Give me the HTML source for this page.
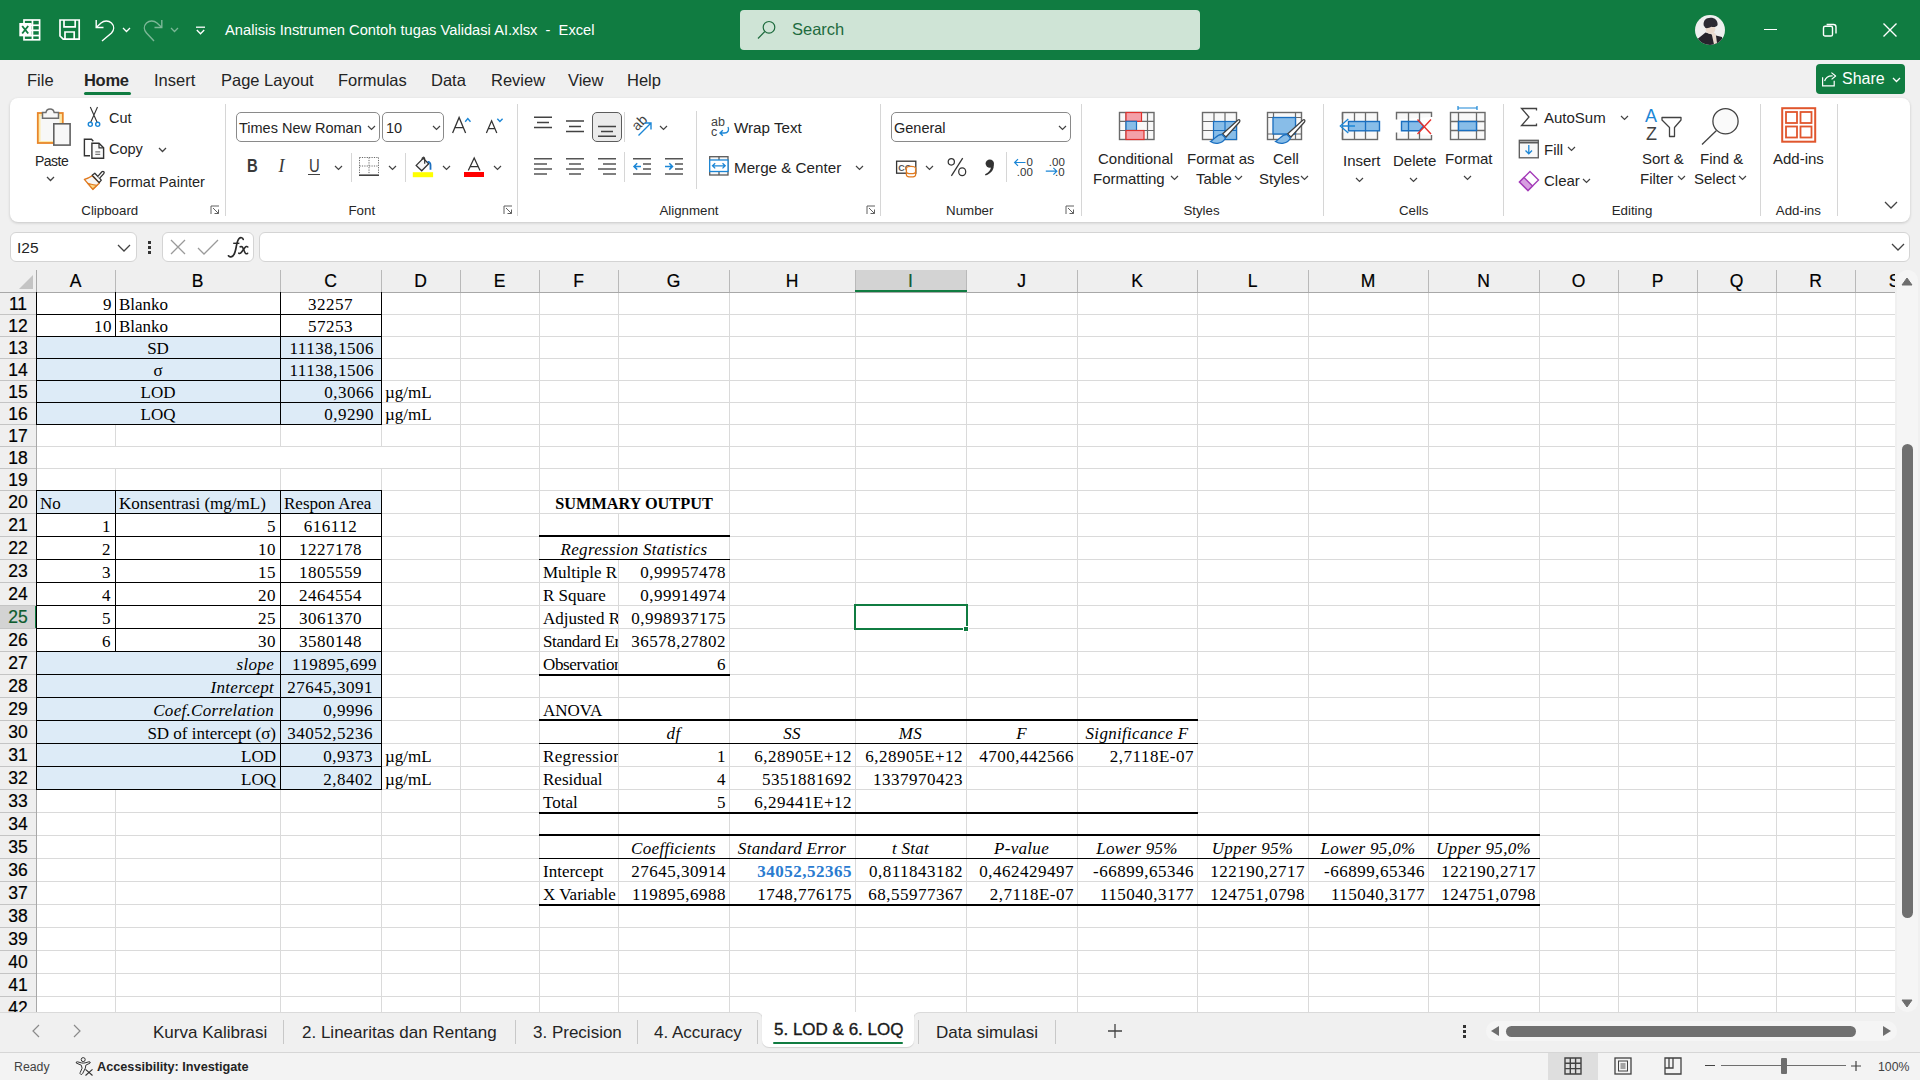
<!DOCTYPE html>
<html><head><meta charset="utf-8">
<style>
*{margin:0;padding:0;box-sizing:border-box}
html,body{width:1920px;height:1080px;overflow:hidden;background:#f0f0f0;font-family:"Liberation Sans",sans-serif;color:#242424}
.a{position:absolute}
svg{position:absolute;overflow:visible}
.t{position:absolute;white-space:nowrap;line-height:1}
#title{left:0;top:0;width:1920px;height:60px;background:#107c41}
#tabs{left:0;top:60px;width:1920px;height:37px;background:#f0f0f0}
#ribbon{left:10px;top:98px;width:1900px;height:124px;background:#fff;border-radius:8px;box-shadow:0 1px 3px rgba(0,0,0,.18)}
.rt{font-size:15px;color:#242424}
.gl{font-size:13.3px;color:#262626}
.sep{position:absolute;width:1px;background:#d6d6d6}
.cell{position:absolute;font-family:"Liberation Serif",serif;font-size:17px;color:#000;white-space:nowrap;line-height:1}
.num{letter-spacing:.5px}
.hl{position:absolute;height:1px;background:#dadada}
.vl{position:absolute;width:1px;background:#dadada}
.bk{position:absolute;background:#000}
.ch{position:absolute;top:270px;height:22px;font-size:16px;color:#000;text-align:center;line-height:22px}
.rh{position:absolute;left:0;width:36px;font-size:16px;color:#000;text-align:center}
</style></head><body>
<div id="title" class="a">
 <!-- excel logo -->
 <svg width="22" height="22" style="left:19px;top:19px" viewBox="0 0 22 22">
  <rect x="5" y="1" width="15.6" height="19.8" fill="none" stroke="#fff" stroke-width="1.7"/>
  <g fill="#fff">
   <rect x="12.6" y="1" width="1.7" height="19.8"/>
   <rect x="5" y="5.4" width="15.6" height="1.7"/><rect x="5" y="10.5" width="15.6" height="1.7"/><rect x="5" y="15.7" width="15.6" height="1.7"/>
  </g>
  <rect x="0.3" y="4" width="12.3" height="13.3" fill="#fff"/>
  <path d="M3.2 7 L9.2 14.5 M9.2 7 L3.2 14.5" stroke="#107c41" stroke-width="1.9"/>
 </svg>
 <!-- save -->
 <svg width="22" height="22" style="left:59px;top:19px" viewBox="0 0 22 22">
  <path d="M1 1 H20.2 V20.2 H4.2 L1 17 Z" fill="none" stroke="#fff" stroke-width="1.7"/>
  <path d="M5 1 V7.8 H16.2 V1" fill="none" stroke="#fff" stroke-width="1.7"/>
  <path d="M6 20.2 V13 H15.2 V20.2" fill="none" stroke="#fff" stroke-width="1.7"/>
 </svg>
 <!-- undo -->
 <svg width="22" height="22" style="left:95px;top:19px" viewBox="0 0 22 22">
  <path d="M1.2 1 V8.5 H8.5" fill="none" stroke="#fff" stroke-width="1.4"/>
  <path d="M1.5 8.3 L6 4 C9 1.5 13.5 1.3 16.5 4 C19.5 7 19.2 11 16.5 14 L7 22" fill="none" stroke="#fff" stroke-width="1.4"/>
 </svg>
 <svg width="10" height="6" style="left:122px;top:27px" viewBox="0 0 10 6"><path d="M1 1 L4.5 4.5 L8 1" fill="none" stroke="#fff" stroke-width="1.3"/></svg>
 <!-- redo faded -->
 <svg width="22" height="22" style="left:143px;top:19px" viewBox="0 0 22 22" opacity="0.45">
  <path d="M18.8 1 V8.5 H11.5" fill="none" stroke="#fff" stroke-width="1.4"/>
  <path d="M18.5 8.3 L14 4 C11 1.5 6.5 1.3 3.5 4 C0.5 7 0.8 11 3.5 14 L11 22" fill="none" stroke="#fff" stroke-width="1.4"/>
 </svg>
 <svg width="10" height="6" style="left:170px;top:27px" viewBox="0 0 10 6" opacity="0.45"><path d="M1 1 L4.5 4.5 L8 1" fill="none" stroke="#fff" stroke-width="1.3"/></svg>
 <!-- customize -->
 <svg width="11" height="10" style="left:195px;top:26px" viewBox="0 0 11 10"><path d="M1 1.2 H10" stroke="#fff" stroke-width="1.3"/><path d="M1.8 4 L5.5 7.8 L9.2 4" fill="none" stroke="#fff" stroke-width="1.3"/></svg>
 <div class="t" style="left:225px;top:23px;font-size:14.7px;color:#fff">Analisis Instrumen Contoh tugas Validasi AI.xlsx&nbsp; - &nbsp;Excel</div>
 <!-- search -->
 <div class="a" style="left:740px;top:10px;width:460px;height:40px;background:#cfe4d6;border-radius:4px"></div>
 <svg width="20" height="20" style="left:757px;top:20px" viewBox="0 0 20 20"><circle cx="12" cy="7.3" r="5.8" fill="none" stroke="#1e6b3e" stroke-width="1.2"/><path d="M7.8 11.5 L1 18.5" stroke="#1e6b3e" stroke-width="1.2"/></svg>
 <div class="t" style="left:792px;top:21px;font-size:16.5px;color:#1e6b3e">Search</div>
 <!-- avatar -->
 <svg width="30" height="30" style="left:1695px;top:15px" viewBox="0 0 30 30">
  <defs><clipPath id="avc"><circle cx="15" cy="15" r="15"/></clipPath></defs>
  <circle cx="15" cy="15" r="15" fill="#efefef"/>
  <g clip-path="url(#avc)">
   <path d="M2.5 24 L10.5 17.5 L17 19.5 L27 22 L28 31 L2 31 Z" fill="#26242c"/>
   <ellipse cx="15.5" cy="14.3" rx="4.8" ry="4.6" fill="#e9d9cd"/>
   <path d="M8.7 10.5 C8 5.5 11 2.8 15.5 2.8 C20 2.8 23 5.5 22.6 10 C21.5 12 19 12.5 16.5 11.8 C14.5 12.8 12 13.5 10.5 13 Z" fill="#2b2a33"/>
   <path d="M16.8 19.5 C18 17.5 20 17.8 20.8 19.5 L22 28 L19 29.5 Z" fill="#eadbd0"/>
  </g>
 </svg>
 <div class="a" style="left:1764px;top:28.5px;width:13px;height:1.5px;background:#fff"></div>
 <svg width="16" height="16" style="left:1822px;top:22px" viewBox="0 0 16 16"><rect x="1.5" y="4.2" width="9" height="9.8" rx="1.6" fill="none" stroke="#fff" stroke-width="1.4"/><path d="M4.6 2.5 H11.5 A2.5 2.5 0 0 1 14 5 V11.5" fill="none" stroke="#fff" stroke-width="1.4"/></svg>
 <svg width="16" height="16" style="left:1882px;top:22px" viewBox="0 0 16 16"><path d="M1.5 1.5 L14.5 14.5 M14.5 1.5 L1.5 14.5" stroke="#fff" stroke-width="1.4"/></svg>
</div>
<div id="tabs" class="a">
 <div class="t" style="left:27px;top:12px;font-size:16.5px">File</div>
 <div class="t" style="left:84px;top:12px;font-size:16.5px;font-weight:bold;letter-spacing:-0.3px">Home</div>
 <div class="a" style="left:84px;top:32px;width:47px;height:3px;border-radius:2px;background:#107c41"></div>
 <div class="t" style="left:154px;top:12px;font-size:16.5px">Insert</div>
 <div class="t" style="left:221px;top:12px;font-size:16.5px">Page Layout</div>
 <div class="t" style="left:338px;top:12px;font-size:16.5px">Formulas</div>
 <div class="t" style="left:431px;top:12px;font-size:16.5px">Data</div>
 <div class="t" style="left:491px;top:12px;font-size:16.5px">Review</div>
 <div class="t" style="left:568px;top:12px;font-size:16.5px">View</div>
 <div class="t" style="left:627px;top:12px;font-size:16.5px">Help</div>
 <div class="a" style="left:1816px;top:4px;width:89px;height:30px;border-radius:4px;background:#107c41"></div>
 <svg width="20" height="20" style="left:1820px;top:10px" viewBox="0 0 20 20"><path d="M2.6 7.2 V15.8 H14.2 V10.8" fill="none" stroke="#fff" stroke-width="1.2"/><path d="M4.6 11 C5.6 7.6 8.6 5.6 12.6 5.8" fill="none" stroke="#fff" stroke-width="1.2"/><path d="M11.4 2.6 L15.6 6 L11.6 9.4" fill="none" stroke="#fff" stroke-width="1.2" stroke-linejoin="round"/></svg>
 <div class="t" style="left:1842px;top:11px;font-size:16px;color:#fff">Share</div>
 <svg width="10" height="6" style="left:1892px;top:17px" viewBox="0 0 10 6"><path d="M1 1 L4.5 4.5 L8 1" fill="none" stroke="#fff" stroke-width="1.3"/></svg>
</div>
<div id="ribbon" class="a"></div>
<!-- ===== Clipboard ===== -->
<svg width="36" height="40" style="left:36px;top:107px" viewBox="0 0 36 40">
 <rect x="1.8" y="6" width="25" height="30" fill="#fde9a8" stroke="#e8862a" stroke-width="1.8"/>
 <rect x="4.5" y="9" width="19" height="25" fill="#f7f7f7"/>
 <path d="M6.5 11.2 V5.6 H9.9 A4.2 4.4 0 0 1 18.2 5.6 H22.5 V11.2 Z" fill="#f7f7f7" stroke="#6e6e6e" stroke-width="1.5"/>
 <rect x="17.8" y="16.8" width="16.3" height="21.3" fill="#f7f7f7" stroke="#616161" stroke-width="1.6"/>
</svg>
<div class="t rt" style="left:35px;top:154px;font-size:14px;letter-spacing:-0.5px">Paste</div>
<svg width="10" height="6" style="left:46px;top:176px" viewBox="0 0 10 6"><path d="M1 1 L4.5 4.5 L8 1" fill="none" stroke="#424242" stroke-width="1.3"/></svg>
<svg width="16" height="22" style="left:86px;top:106px" viewBox="0 0 16 22">
 <path d="M4.3 1.1 L11.2 16.4 M11.5 1.1 L4.6 16.4" stroke="#333" stroke-width="1.1" fill="none"/>
 <circle cx="4.3" cy="18.3" r="2.05" fill="#fff" stroke="#1b86d6" stroke-width="1.4"/>
 <circle cx="11.7" cy="18.3" r="2.05" fill="#fff" stroke="#1b86d6" stroke-width="1.4"/>
</svg>
<div class="t rt" style="left:109px;top:111px;font-size:14.5px">Cut</div>
<svg width="26" height="26" style="left:80px;top:135px" viewBox="0 0 26 26">
 <path d="M10 20.8 H4.4 V4.2 H11.5 L13.3 6.2" fill="none" stroke="#333" stroke-width="1.4"/>
 <path d="M11.9 8.3 H19 L23.6 12.8 V23.3 H11.9 Z" fill="#fafafa" stroke="#333" stroke-width="1.4" stroke-linejoin="miter"/>
 <path d="M19 8.3 V12.8 H23.6" fill="none" stroke="#333" stroke-width="1.2"/>
 <path d="M15.3 16.9 H20.2 M15.3 19.4 H20.2" stroke="#777" stroke-width="1.1"/>
</svg>
<div class="t rt" style="left:109px;top:142px;font-size:14.5px">Copy</div>
<svg width="10" height="6" style="left:158px;top:147px" viewBox="0 0 10 6"><path d="M1 1 L4.5 4.5 L8 1" fill="none" stroke="#424242" stroke-width="1.3"/></svg>
<svg width="26" height="26" style="left:80px;top:165px" viewBox="0 0 26 26">
  <path d="M12.2 10.8 Q8.5 13.4 4.4 14.4 L12.8 24.4 L19.4 18 Z" fill="#f6f6f6" stroke="#e07a1f" stroke-width="1.4" stroke-linejoin="round"/>
  <path d="M7.6 18.2 Q12.2 19.6 16.8 20.4 L12.8 24 Z" fill="#fbd98a" stroke="#e07a1f" stroke-width="1.1" stroke-linejoin="round"/>
  <path d="M12.2 10.3 L14.8 8.2 L21.3 15.1 L19.2 17.6 Z" fill="#fff" stroke="#333" stroke-width="1.3" stroke-linejoin="round"/>
  <path d="M17.6 11.6 L21.9 6.8 Q22.9 5.9 23.8 6.8 Q24.6 7.7 23.8 8.6 L19.5 13.4" fill="#fff" stroke="#333" stroke-width="1.3"/>
</svg>
<div class="t rt" style="left:109px;top:175px;font-size:14.5px">Format Painter</div>
<div class="t gl" style="left:81.3px;top:204px">Clipboard</div>
<svg width="10" height="10" style="left:210px;top:205px" viewBox="0 0 10 10"><path d="M1 9 V1 H9" fill="none" stroke="#616161" stroke-width="1"/><path d="M3 3 L8.5 8.5 M4.5 8.5 H8.5 V4.5" fill="none" stroke="#616161" stroke-width="1"/></svg>
<div class="sep" style="left:225px;top:104px;height:112px"></div>
<!-- ===== Font ===== -->
<div class="a" style="left:236px;top:112px;width:144px;height:30px;border:1px solid #8a8a8a;border-radius:5px"></div>
<div class="t rt" style="left:239px;top:121px;font-size:14.5px">Times New Roman</div>
<svg width="10" height="6" style="left:367px;top:125px" viewBox="0 0 10 6"><path d="M1 1 L4.5 4.5 L8 1" fill="none" stroke="#424242" stroke-width="1.2"/></svg>
<div class="a" style="left:382px;top:112px;width:62px;height:30px;border:1px solid #8a8a8a;border-radius:5px"></div>
<div class="t rt" style="left:386px;top:121px;font-size:14.5px">10</div>
<svg width="10" height="6" style="left:432px;top:125px" viewBox="0 0 10 6"><path d="M1 1 L4.5 4.5 L8 1" fill="none" stroke="#424242" stroke-width="1.2"/></svg>
<svg width="22" height="20" style="left:450px;top:115px" viewBox="0 0 22 20"><path d="M2.6 17.9 L9.1 2.4 L15.6 17.9 M4.9 12.7 H13.3" fill="none" stroke="#333" stroke-width="1.3"/><path d="M15.2 6.8 L17.8 3.6 L20.5 6.8" fill="none" stroke="#1b86d6" stroke-width="1.4"/></svg>
<svg width="22" height="18" style="left:484px;top:118px" viewBox="0 0 22 18"><path d="M2.4 15.1 L7.6 2.8 L12.8 15.1 M4.3 10.7 H10.9" fill="none" stroke="#333" stroke-width="1.25"/><path d="M13.3 0.8 L15.9 3.6 L18.6 0.8" fill="none" stroke="#1b86d6" stroke-width="1.4"/></svg>
<div class="t" style="left:246.5px;top:158px;font-size:17.5px;font-weight:bold;color:#3a3a3a;transform:scaleX(0.85);transform-origin:0 0">B</div>
<div class="t" style="left:278.5px;top:157px;font-size:18px;font-style:italic;font-family:'Liberation Serif';color:#3a3a3a">I</div>
<div class="t" style="left:309px;top:158px;font-size:17.5px;color:#3a3a3a;transform:scaleX(0.85);transform-origin:0 0">U</div>
<div class="a" style="left:308px;top:174px;width:12px;height:1.2px;background:#424242"></div>
<svg width="10" height="6" style="left:334px;top:165px" viewBox="0 0 10 6"><path d="M1 1 L4.5 4.5 L8 1" fill="none" stroke="#424242" stroke-width="1.2"/></svg>
<div class="sep" style="left:351px;top:153px;height:29px"></div>
<svg width="20" height="20" style="left:359px;top:157px" viewBox="0 0 20 20">
 <path d="M0.5 0.5 H19.5 M0.5 0.5 V17 M19.5 0.5 V17 M10 0.5 V17 M0.5 9 H19.5" fill="none" stroke="#6a6a6a" stroke-width="1" stroke-dasharray="1.2 1.2"/>
 <path d="M0 18.2 H20" stroke="#424242" stroke-width="1.6"/>
</svg>
<svg width="10" height="6" style="left:388px;top:165px" viewBox="0 0 10 6"><path d="M1 1 L4.5 4.5 L8 1" fill="none" stroke="#424242" stroke-width="1.2"/></svg>
<div class="sep" style="left:405px;top:153px;height:29px"></div>
<svg width="22" height="22" style="left:412px;top:156px" viewBox="0 0 22 22">
 <path d="M4.2 9.4 L11.2 2.4 L16.7 7.8 L9.7 14.8 Z" fill="#f8f8f8" stroke="#333" stroke-width="1.3" stroke-linejoin="miter"/>
 <path d="M10 3.8 C9.8 0.6 12.6 0.4 12.7 3 V7.8" fill="none" stroke="#333" stroke-width="1.2"/>
 <path d="M15.6 5.9 C17.6 5.6 18.5 7.3 18.5 9 V13.8" fill="none" stroke="#1b6fc0" stroke-width="1.8"/>
 <rect x="0.8" y="16.2" width="20.3" height="5" fill="#ffff00"/>
</svg>
<svg width="10" height="6" style="left:442px;top:165px" viewBox="0 0 10 6"><path d="M1 1 L4.5 4.5 L8 1" fill="none" stroke="#424242" stroke-width="1.2"/></svg>
<svg width="14" height="16" style="left:467px;top:156px" viewBox="0 0 14 16"><path d="M1.3 14.6 L7.2 2 L13 14.6 M3.3 10.6 H11.1" fill="none" stroke="#333" stroke-width="1.25"/></svg>
<div class="a" style="left:464px;top:172px;width:20px;height:5px;background:#ff0000"></div>
<svg width="10" height="6" style="left:493px;top:165px" viewBox="0 0 10 6"><path d="M1 1 L4.5 4.5 L8 1" fill="none" stroke="#424242" stroke-width="1.2"/></svg>
<div class="t gl" style="left:348.5px;top:204px">Font</div>
<svg width="10" height="10" style="left:503px;top:205px" viewBox="0 0 10 10"><path d="M1 9 V1 H9" fill="none" stroke="#616161" stroke-width="1"/><path d="M3 3 L8.5 8.5 M4.5 8.5 H8.5 V4.5" fill="none" stroke="#616161" stroke-width="1"/></svg>
<div class="sep" style="left:517px;top:104px;height:112px"></div>
<!-- ===== Alignment ===== -->
<svg width="20" height="14" style="left:534px;top:116px" viewBox="0 0 20 14"><path d="M0 1.2 H18 M3 6.5 H15 M0 11.5 H18" stroke="#424242" stroke-width="1.5"/></svg>
<svg width="20" height="14" style="left:566px;top:120px" viewBox="0 0 20 14"><path d="M0 1 H18 M3 6.4 H15 M0 11.4 H18" stroke="#424242" stroke-width="1.5"/></svg>
<div class="a" style="left:592px;top:112px;width:30px;height:30px;border:1px solid #5c5c5c;border-radius:5px;background:#ebebeb"></div>
<svg width="20" height="14" style="left:598px;top:125px" viewBox="0 0 20 14"><path d="M0 1.4 H18 M3 6.4 H15 M0 11.2 H18" stroke="#424242" stroke-width="1.5"/></svg>
<div class="sep" style="left:624px;top:112px;height:30px"></div>
<div class="t" style="left:632px;top:115px;font-size:14px;color:#424242;transform:rotate(-45deg);transform-origin:8px 8px">ab</div>
<svg width="16" height="16" style="left:637px;top:121px" viewBox="0 0 16 16"><path d="M1.5 14.5 L14 2 M7.5 2 H14 V8.5" fill="none" stroke="#1b86d6" stroke-width="1.4"/></svg>
<svg width="10" height="6" style="left:659px;top:125px" viewBox="0 0 10 6"><path d="M1 1 L4.5 4.5 L8 1" fill="none" stroke="#424242" stroke-width="1.2"/></svg>
<svg width="20" height="18" style="left:534px;top:158px" viewBox="0 0 20 18"><path d="M0 0.7 H18 M0 5.9 H13 M0 11 H18 M0 16 H13" stroke="#555" stroke-width="1.5"/></svg>
<svg width="20" height="18" style="left:566px;top:158px" viewBox="0 0 20 18"><path d="M0 0.7 H18 M3 5.9 H15 M0 11 H18 M3 16 H15" stroke="#555" stroke-width="1.5"/></svg>
<svg width="20" height="18" style="left:598px;top:158px" viewBox="0 0 20 18"><path d="M0 0.7 H18 M5 5.9 H18 M0 11 H18 M5 16 H18" stroke="#555" stroke-width="1.5"/></svg>
<div class="sep" style="left:624px;top:152px;height:30px"></div>
<svg width="20" height="18" style="left:633px;top:158px" viewBox="0 0 20 18"><path d="M0 0.7 H18 M10 5.9 H18 M10 11 H18 M0 16 H18" stroke="#555" stroke-width="1.5"/><path d="M8 8.4 H1 M4.2 5.2 L1 8.4 L4.2 11.6" fill="none" stroke="#1b86d6" stroke-width="1.5"/></svg>
<svg width="20" height="18" style="left:665px;top:158px" viewBox="0 0 20 18"><path d="M0 0.7 H18 M10 5.9 H18 M10 11 H18 M0 16 H18" stroke="#555" stroke-width="1.5"/><path d="M0 8.4 H7.5 M4.3 5.2 L7.5 8.4 L4.3 11.6" fill="none" stroke="#1b86d6" stroke-width="1.5"/></svg>
<div class="sep" style="left:696px;top:111px;height:78px"></div>
<div class="t" style="left:711px;top:117px;font-size:12.5px;color:#424242;line-height:10px">ab<br>c</div>
<svg width="12" height="11" style="left:718px;top:126px" viewBox="0 0 12 11"><path d="M10 1 C11.5 4 10 7 6.5 7 H2 M4.8 4.2 L2 7 L4.8 9.8" fill="none" stroke="#1b86d6" stroke-width="1.4"/></svg>
<div class="t rt" style="left:734px;top:120px;font-size:15.2px">Wrap Text</div>
<svg width="20" height="20" style="left:709px;top:156px" viewBox="0 0 20 20">
 <rect x="0.7" y="0.7" width="18.3" height="18.3" fill="#f7f7f7" stroke="#5a5a5a" stroke-width="1.3"/>
 <path d="M10 0.7 V4 M10 15.5 V19" stroke="#5a5a5a" stroke-width="1.3"/>
 <rect x="0.7" y="4" width="18.3" height="11.5" fill="#fff" stroke="#1b86d6" stroke-width="1.3"/>
 <path d="M3.5 9.8 H16.2 M6.2 7.2 L3.5 9.8 L6.2 12.4 M13.5 7.2 L16.2 9.8 L13.5 12.4" fill="none" stroke="#1b86d6" stroke-width="1.3"/>
</svg>
<div class="t rt" style="left:734px;top:160px;font-size:15.2px">Merge &amp; Center</div>
<svg width="10" height="6" style="left:855px;top:165px" viewBox="0 0 10 6"><path d="M1 1 L4.5 4.5 L8 1" fill="none" stroke="#424242" stroke-width="1.2"/></svg>
<div class="t gl" style="left:659.4px;top:204px">Alignment</div>
<svg width="10" height="10" style="left:866px;top:205px" viewBox="0 0 10 10"><path d="M1 9 V1 H9" fill="none" stroke="#616161" stroke-width="1"/><path d="M3 3 L8.5 8.5 M4.5 8.5 H8.5 V4.5" fill="none" stroke="#616161" stroke-width="1"/></svg>
<div class="sep" style="left:880px;top:104px;height:112px"></div>
<!-- ===== Number ===== -->
<div class="a" style="left:891px;top:112px;width:180px;height:30px;border:1px solid #8a8a8a;border-radius:5px"></div>
<div class="t rt" style="left:894px;top:121px;font-size:14.5px">General</div>
<svg width="10" height="6" style="left:1058px;top:125px" viewBox="0 0 10 6"><path d="M1 1 L4.5 4.5 L8 1" fill="none" stroke="#424242" stroke-width="1.2"/></svg>
<svg width="22" height="20" style="left:895px;top:159px" viewBox="0 0 22 20">
 <rect x="1.6" y="2.2" width="19.2" height="12" fill="#fff" stroke="#333" stroke-width="1.3"/>
 <text x="3.2" y="11.8" font-family="Liberation Sans" font-size="9" font-weight="bold" fill="#555">CC</text>
 <ellipse cx="16" cy="9.3" rx="4.6" ry="1.9" fill="#fff" stroke="#e07a1f" stroke-width="1.3"/>
 <path d="M11.4 9.3 V16 A4.6 1.9 0 0 0 20.6 16 V9.3 M11.4 12.7 A4.6 1.9 0 0 0 20.6 12.7" fill="#fff" stroke="#e07a1f" stroke-width="1.3"/>
</svg>
<svg width="10" height="6" style="left:925px;top:165px" viewBox="0 0 10 6"><path d="M1 1 L4.5 4.5 L8 1" fill="none" stroke="#424242" stroke-width="1.2"/></svg>
<svg width="22" height="22" style="left:945px;top:156px" viewBox="0 0 22 22"><ellipse cx="6.3" cy="5.8" rx="3.1" ry="3.2" fill="none" stroke="#333" stroke-width="1.25"/><ellipse cx="17.2" cy="15.7" rx="3.5" ry="3.9" fill="none" stroke="#333" stroke-width="1.25"/><path d="M17.7 2.1 L6.4 19.9" stroke="#333" stroke-width="1.25"/></svg>
<svg width="12" height="18" style="left:984px;top:159px" viewBox="0 0 12 18"><circle cx="5.8" cy="4.6" r="4.2" fill="#333"/><path d="M9.6 5 C10.5 10 7.5 14.5 1.5 16.5 L1 15.3 C5 13.5 7.2 10.5 6.8 7.5 Z" fill="#333"/></svg>
<div class="sep" style="left:1006px;top:152px;height:30px"></div>
<svg width="24" height="22" style="left:1012px;top:156px" viewBox="0 0 24 22">
 <text x="14.6" y="9.6" font-family="Liberation Sans" font-size="11.5" fill="#333">0</text>
 <text x="4.8" y="19.9" font-family="Liberation Sans" font-size="11.5" fill="#333">.00</text>
 <path d="M13.5 6.5 H2.6 M6 3.1 L2.6 6.5 L6 9.9" fill="none" stroke="#1b86d6" stroke-width="1.2"/>
</svg>
<svg width="24" height="22" style="left:1044px;top:156px" viewBox="0 0 24 22">
 <text x="4.8" y="9.6" font-family="Liberation Sans" font-size="11.5" fill="#333">.00</text>
 <text x="11" y="19.9" font-family="Liberation Sans" font-size="11.5" fill="#333">.0</text>
 <path d="M1.8 15.2 H12.8 M9.4 11.8 L12.8 15.2 L9.4 18.6" fill="none" stroke="#1b86d6" stroke-width="1.2"/>
</svg>
<div class="t gl" style="left:946.1px;top:204px">Number</div>
<svg width="10" height="10" style="left:1065px;top:205px" viewBox="0 0 10 10"><path d="M1 9 V1 H9" fill="none" stroke="#616161" stroke-width="1"/><path d="M3 3 L8.5 8.5 M4.5 8.5 H8.5 V4.5" fill="none" stroke="#616161" stroke-width="1"/></svg>
<div class="sep" style="left:1081px;top:104px;height:112px"></div>
<!-- ===== Styles ===== -->
<svg width="38" height="30" style="left:1118px;top:111px" viewBox="0 0 38 30">
 <rect x="1.5" y="1.5" width="34.5" height="27" fill="#f8f8f8" stroke="#6a6a6a" stroke-width="1.4"/>
 <path d="M8 1.5 V28.5 M29.5 1.5 V28.5 M1.5 10.3 H36 M1.5 19.5 H36" stroke="#6a6a6a" stroke-width="1.2"/>
 <rect x="8" y="1.5" width="15.5" height="8.8" fill="#f4a0a8" stroke="#e0312d" stroke-width="1.2"/>
 <rect x="8" y="10.3" width="10.5" height="9.2" fill="#88bde8" stroke="#1a6fc0" stroke-width="1.2"/>
 <rect x="8" y="19.5" width="18" height="9" fill="#f4a0a8" stroke="#e0312d" stroke-width="1.2"/>
</svg>
<div class="t rt" style="left:1098px;top:151px;font-size:15px">Conditional</div>
<div class="t rt" style="left:1093px;top:171px;font-size:15px">Formatting</div>
<svg width="10" height="6" style="left:1170px;top:175px" viewBox="0 0 10 6"><path d="M1 1 L4.5 4.5 L8 1" fill="none" stroke="#424242" stroke-width="1.2"/></svg>
<svg width="40" height="36" style="left:1201px;top:111px" viewBox="0 0 40 36">
 <rect x="1.5" y="1.5" width="34" height="27" fill="#f8f8f8" stroke="#6a6a6a" stroke-width="1.4"/>
 <path d="M13 1.5 V28.5 M24 1.5 V28.5 M1.5 10.5 H35.5 M1.5 19.5 H35.5" stroke="#6a6a6a" stroke-width="1.2"/>
 <rect x="12.5" y="10.5" width="23" height="18" fill="#88bde8" stroke="#1a6fc0" stroke-width="1.2"/>
 <path d="M24 10.5 V28.5 M12.5 19.5 H35.5" stroke="#1a6fc0" stroke-width="1.2"/>
 <path d="M37 9 C38.5 8 39.5 9.5 38.5 11 L25 26 L21.5 23 Z" fill="#fff" stroke="#424242" stroke-width="1.3"/>
 <path d="M21 23.5 C16 23 14 28 9.5 30.5 C14 33.5 21.5 33 24.5 27 Z" fill="#88bde8" stroke="#1a6fc0" stroke-width="1.3"/>
</svg>
<div class="t rt" style="left:1187px;top:151px;font-size:15px">Format as</div>
<div class="t rt" style="left:1196px;top:171px;font-size:15px">Table</div>
<svg width="10" height="6" style="left:1234px;top:175px" viewBox="0 0 10 6"><path d="M1 1 L4.5 4.5 L8 1" fill="none" stroke="#424242" stroke-width="1.2"/></svg>
<svg width="40" height="36" style="left:1266px;top:111px" viewBox="0 0 40 36">
 <rect x="1.5" y="1.5" width="34" height="27" fill="#f8f8f8" stroke="#6a6a6a" stroke-width="1.4"/>
 <path d="M7.5 1.5 V28.5 M29.5 1.5 V28.5 M1.5 6.5 H35.5 M1.5 23 H35.5" stroke="#6a6a6a" stroke-width="1.2"/>
 <rect x="7" y="6.5" width="22.5" height="16.5" fill="#88bde8" stroke="#1a6fc0" stroke-width="1.3"/>
 <path d="M37 9 C38.5 8 39.5 9.5 38.5 11 L25 26 L21.5 23 Z" fill="#fff" stroke="#424242" stroke-width="1.3"/>
 <path d="M21 23.5 C16 23 14 28 9.5 30.5 C14 33.5 21.5 33 24.5 27 Z" fill="#88bde8" stroke="#1a6fc0" stroke-width="1.3"/>
</svg>
<div class="t rt" style="left:1273px;top:151px;font-size:15px">Cell</div>
<div class="t rt" style="left:1259px;top:171px;font-size:15px">Styles</div>
<svg width="10" height="6" style="left:1300px;top:175px" viewBox="0 0 10 6"><path d="M1 1 L4.5 4.5 L8 1" fill="none" stroke="#424242" stroke-width="1.2"/></svg>
<div class="t gl" style="left:1183.4px;top:204px">Styles</div>
<div class="sep" style="left:1323px;top:104px;height:112px"></div>
<!-- ===== Cells ===== -->
<svg width="42" height="30" style="left:1339px;top:111px" viewBox="0 0 42 30">
 <rect x="3.5" y="1.5" width="35" height="27" fill="#f8f8f8" stroke="#6a6a6a" stroke-width="1.4"/>
 <path d="M15.5 1.5 V28.5 M26.5 1.5 V28.5" stroke="#6a6a6a" stroke-width="1.3"/>
 <rect x="9.5" y="10.5" width="31" height="9.3" fill="#88bde8" stroke="#1a6fc0" stroke-width="1.4"/>
 <path d="M26.5 10.5 V19.8" stroke="#1a6fc0" stroke-width="1.3"/>
 <path d="M16 15 H3 M9.3 8 L1.3 15 L9.3 22" fill="none" stroke="#1b86d6" stroke-width="1.3"/>
 <path d="M3.5 8.5 V1.5 M3.5 21.5 V28.5" stroke="#6a6a6a" stroke-width="1.4"/>
</svg>
<div class="t rt" style="left:1343px;top:153px;font-size:15px">Insert</div>
<svg width="10" height="6" style="left:1355px;top:177px" viewBox="0 0 10 6"><path d="M1 1 L4.5 4.5 L8 1" fill="none" stroke="#424242" stroke-width="1.2"/></svg>
<svg width="40" height="30" style="left:1395px;top:111px" viewBox="0 0 40 30">
 <path d="M1.5 8.5 V1.5 H36.5 V6 M1.5 21.5 V28.5 H36.5 V24" fill="#f8f8f8" stroke="#6a6a6a" stroke-width="1.4"/>
 <path d="M13.5 1.5 V28.5 M24.5 1.5 V28.5" stroke="#6a6a6a" stroke-width="1.3"/>
 <path d="M6.5 10.5 H24.5 L28.5 15 L24.5 19.8 H6.5 Z" fill="#88bde8" stroke="#1a6fc0" stroke-width="1.4"/>
 <path d="M13.5 10.5 V19.8" stroke="#1a6fc0" stroke-width="1.3"/>
 <path d="M22.5 8.5 L36 23 M36 8.5 L22.5 23" stroke="#e8312d" stroke-width="1.4"/>
</svg>
<div class="t rt" style="left:1393px;top:153px;font-size:15px">Delete</div>
<svg width="10" height="6" style="left:1409px;top:177px" viewBox="0 0 10 6"><path d="M1 1 L4.5 4.5 L8 1" fill="none" stroke="#424242" stroke-width="1.2"/></svg>
<svg width="38" height="36" style="left:1449px;top:105px" viewBox="0 0 38 36">
 <rect x="1.5" y="7.5" width="34.5" height="27" fill="#f8f8f8" stroke="#6a6a6a" stroke-width="1.4"/>
 <path d="M9.5 7.5 V34.5 M27.5 7.5 V34.5 M1.5 16.5 H36 M1.5 25.5 H36" stroke="#6a6a6a" stroke-width="1.3"/>
 <rect x="9.5" y="16.5" width="18" height="9" fill="#88bde8" stroke="#1a6fc0" stroke-width="1.4"/>
 <path d="M9 3 H28 M9 1 V5 M28 1 V5" stroke="#1b86d6" stroke-width="1.2"/>
</svg>
<div class="t rt" style="left:1445px;top:151px;font-size:15px">Format</div>
<svg width="10" height="6" style="left:1463px;top:175px" viewBox="0 0 10 6"><path d="M1 1 L4.5 4.5 L8 1" fill="none" stroke="#424242" stroke-width="1.2"/></svg>
<div class="t gl" style="left:1398.9px;top:204px">Cells</div>
<div class="sep" style="left:1503px;top:104px;height:112px"></div>
<!-- ===== Editing ===== -->
<svg width="18" height="20" style="left:1520px;top:107px" viewBox="0 0 18 20"><path d="M16.5 3.5 V1.5 H1.5 L9 10 L1.5 18.5 H16.5 V16.5" fill="none" stroke="#424242" stroke-width="1.3"/></svg>
<div class="t rt" style="left:1544px;top:110px;font-size:15px">AutoSum</div>
<svg width="10" height="6" style="left:1620px;top:115px" viewBox="0 0 10 6"><path d="M1 1 L4.5 4.5 L8 1" fill="none" stroke="#424242" stroke-width="1.2"/></svg>
<svg width="22" height="20" style="left:1518px;top:139px" viewBox="0 0 22 20"><rect x="1.3" y="1.3" width="19" height="17.5" fill="#f8f8f8" stroke="#5a5a5a" stroke-width="1.3"/><path d="M1.3 3.5 H20.3" stroke="#5a5a5a" stroke-width="2"/><path d="M10.8 6 V14.5 M7.5 11.5 L10.8 14.8 L14 11.5" fill="none" stroke="#1b86d6" stroke-width="1.3"/></svg>
<div class="t rt" style="left:1544px;top:142px;font-size:15px">Fill</div>
<svg width="10" height="6" style="left:1567px;top:146px" viewBox="0 0 10 6"><path d="M1 1 L4.5 4.5 L8 1" fill="none" stroke="#424242" stroke-width="1.2"/></svg>
<svg width="22" height="22" style="left:1518px;top:170px" viewBox="0 0 22 22"><path d="M1.5 12 L12 1.5 L20.5 10 L10 20.5 Z" fill="#fff" stroke="#a43cb8" stroke-width="1.4"/><path d="M1.5 12 L6 7.5 L14.5 16 L10 20.5 Z" fill="#d79ee0" stroke="#a43cb8" stroke-width="1.4"/></svg>
<div class="t rt" style="left:1544px;top:173px;font-size:15px">Clear</div>
<svg width="10" height="6" style="left:1582px;top:178px" viewBox="0 0 10 6"><path d="M1 1 L4.5 4.5 L8 1" fill="none" stroke="#424242" stroke-width="1.2"/></svg>
<div class="t" style="left:1645px;top:107px;font-size:18px;color:#1b86d6">A</div>
<div class="t" style="left:1646px;top:125px;font-size:18px;color:#424242">Z</div>
<svg width="22" height="22" style="left:1661px;top:116px" viewBox="0 0 22 22"><path d="M1 1.5 H20 V4 L13.5 11.5 V20.5 H8.5 V11.5 L1 4 Z" fill="#fff" stroke="#424242" stroke-width="1.3" stroke-linejoin="round"/></svg>
<div class="t rt" style="left:1642px;top:151px;font-size:15px">Sort &amp;</div>
<div class="t rt" style="left:1640px;top:171px;font-size:15px">Filter</div>
<svg width="10" height="6" style="left:1677px;top:175px" viewBox="0 0 10 6"><path d="M1 1 L4.5 4.5 L8 1" fill="none" stroke="#424242" stroke-width="1.2"/></svg>
<svg width="40" height="40" style="left:1700px;top:106px" viewBox="0 0 40 40"><circle cx="25.5" cy="15.2" r="12.6" fill="#fafafa" stroke="#424242" stroke-width="1.3"/><path d="M16.5 24.5 L2 38.5" stroke="#424242" stroke-width="1.3"/></svg>
<div class="t rt" style="left:1700px;top:151px;font-size:15px">Find &amp;</div>
<div class="t rt" style="left:1694px;top:171px;font-size:15px">Select</div>
<svg width="10" height="6" style="left:1738px;top:175px" viewBox="0 0 10 6"><path d="M1 1 L4.5 4.5 L8 1" fill="none" stroke="#424242" stroke-width="1.2"/></svg>
<div class="t gl" style="left:1611.7px;top:204px">Editing</div>
<div class="sep" style="left:1760px;top:104px;height:112px"></div>
<!-- ===== Add-ins ===== -->
<svg width="36" height="36" style="left:1781px;top:107px" viewBox="0 0 36 36"><rect x="1.2" y="1.2" width="33" height="33.5" fill="none" stroke="#e0562d" stroke-width="2"/><rect x="5" y="5" width="11" height="11" fill="none" stroke="#e0562d" stroke-width="1.8"/><rect x="19.5" y="5" width="11" height="11" fill="none" stroke="#e0562d" stroke-width="1.8"/><rect x="5" y="19.5" width="11" height="11" fill="none" stroke="#e0562d" stroke-width="1.8"/><rect x="19.5" y="19.5" width="11" height="11" fill="none" stroke="#e0562d" stroke-width="1.8"/></svg>
<div class="t rt" style="left:1773px;top:151px;font-size:15px">Add-ins</div>
<div class="t gl" style="left:1775.8px;top:204px">Add-ins</div>
<div class="sep" style="left:1837px;top:104px;height:112px"></div>
<svg width="14" height="8" style="left:1884px;top:201px" viewBox="0 0 14 8"><path d="M1 1 L7 7 L13 1" fill="none" stroke="#424242" stroke-width="1.3"/></svg>
<!-- formula bar -->
<div class="a" style="left:10px;top:232px;width:127px;height:30px;background:#fff;border:1px solid #d4d4d4;border-radius:6px"></div>
<div class="t" style="left:17px;top:240px;font-size:15.5px;color:#242424">I25</div>
<svg width="14" height="8" style="left:117px;top:244px" viewBox="0 0 14 8"><path d="M1 1 L7 7 L13 1" fill="none" stroke="#424242" stroke-width="1.3"/></svg>
<div class="a" style="left:148px;top:241px;width:3px;height:3px;background:#333"></div>
<div class="a" style="left:148px;top:246px;width:3px;height:3px;background:#333"></div>
<div class="a" style="left:148px;top:251px;width:3px;height:3px;background:#333"></div>
<div class="a" style="left:162px;top:232px;width:92px;height:30px;background:#fff;border:1px solid #d4d4d4;border-radius:6px"></div>
<svg width="16" height="16" style="left:170px;top:239px" viewBox="0 0 16 16"><path d="M1 1 L15 15 M15 1 L1 15" stroke="#9a9a9a" stroke-width="1.3"/></svg>
<svg width="22" height="16" style="left:197px;top:239px" viewBox="0 0 22 16"><path d="M1 9 L7 15 L21 1" fill="none" stroke="#9a9a9a" stroke-width="1.3"/></svg>
<svg width="24" height="24" style="left:226px;top:235px" viewBox="0 0 24 24"><path d="M17.2 4.4 C16.8 2.6 14.6 2.1 13 3.6 C11.4 5.1 10.9 8.2 10.2 12 C9.4 16.5 8.5 19.6 6.8 21 C5.3 22.3 3.3 22 2.5 20.8" fill="none" stroke="#2a2a2a" stroke-width="1.7" stroke-linecap="round"/><path d="M7.2 8.3 H13.4" stroke="#2a2a2a" stroke-width="1.4"/><path d="M14.2 11.8 C15.6 11 16.5 11.8 17.2 13.5 L18.8 17.3 C19.5 18.9 20.4 19.2 21.6 18.3" fill="none" stroke="#2a2a2a" stroke-width="1.6" stroke-linecap="round"/><path d="M21.8 12 C20.8 11 19.8 11.6 18.8 12.8 L15.8 16.8 C14.8 18.3 13.8 18.8 12.8 18.2" fill="none" stroke="#2a2a2a" stroke-width="1.6" stroke-linecap="round"/></svg>
<div class="a" style="left:259px;top:232px;width:1651px;height:30px;background:#fff;border:1px solid #d4d4d4;border-radius:6px"></div>
<svg width="14" height="8" style="left:1891px;top:243px" viewBox="0 0 14 8"><path d="M1 1 L7 7 L13 1" fill="none" stroke="#424242" stroke-width="1.3"/></svg>
<div class="a" style="left:36px;top:292px;width:1859px;height:720px;background:#fff"></div>
<div class="a" style="left:0;top:270px;width:1895px;height:22px;background:#efefef"></div>
<div class="a" style="left:0;top:292px;width:36px;height:720px;background:#efefef"></div>
<svg width="16" height="16" style="left:18px;top:274px" viewBox="0 0 16 16"><path d="M15 1 V15 H1 Z" fill="#c4c4c4"/></svg>
<div class="a" style="left:115px;top:292px;width:1px;height:45px;background:#dadada"></div>
<div class="a" style="left:115px;top:424px;width:1px;height:23px;background:#dadada"></div>
<div class="a" style="left:115px;top:468px;width:1px;height:184px;background:#dadada"></div>
<div class="a" style="left:115px;top:789px;width:1px;height:224px;background:#dadada"></div>
<div class="a" style="left:280px;top:292px;width:1px;height:155px;background:#dadada"></div>
<div class="a" style="left:280px;top:468px;width:1px;height:545px;background:#dadada"></div>
<div class="a" style="left:381px;top:292px;width:1px;height:155px;background:#dadada"></div>
<div class="a" style="left:381px;top:468px;width:1px;height:545px;background:#dadada"></div>
<div class="a" style="left:460px;top:292px;width:1px;height:721px;background:#dadada"></div>
<div class="a" style="left:539px;top:292px;width:1px;height:721px;background:#dadada"></div>
<div class="a" style="left:618px;top:292px;width:1px;height:199px;background:#dadada"></div>
<div class="a" style="left:618px;top:513px;width:1px;height:24px;background:#dadada"></div>
<div class="a" style="left:618px;top:559px;width:1px;height:454px;background:#dadada"></div>
<div class="a" style="left:729px;top:292px;width:1px;height:721px;background:#dadada"></div>
<div class="a" style="left:855px;top:292px;width:1px;height:721px;background:#dadada"></div>
<div class="a" style="left:966px;top:292px;width:1px;height:721px;background:#dadada"></div>
<div class="a" style="left:1077px;top:292px;width:1px;height:721px;background:#dadada"></div>
<div class="a" style="left:1197px;top:292px;width:1px;height:721px;background:#dadada"></div>
<div class="a" style="left:1308px;top:292px;width:1px;height:721px;background:#dadada"></div>
<div class="a" style="left:1428px;top:292px;width:1px;height:721px;background:#dadada"></div>
<div class="a" style="left:1539px;top:292px;width:1px;height:721px;background:#dadada"></div>
<div class="a" style="left:1618px;top:292px;width:1px;height:721px;background:#dadada"></div>
<div class="a" style="left:1697px;top:292px;width:1px;height:721px;background:#dadada"></div>
<div class="a" style="left:1776px;top:292px;width:1px;height:721px;background:#dadada"></div>
<div class="a" style="left:1855px;top:292px;width:1px;height:721px;background:#dadada"></div>
<div class="a" style="left:36px;top:314px;width:1859px;height:1px;background:#dadada"></div>
<div class="a" style="left:36px;top:336px;width:1859px;height:1px;background:#dadada"></div>
<div class="a" style="left:36px;top:358px;width:1859px;height:1px;background:#dadada"></div>
<div class="a" style="left:36px;top:380px;width:1859px;height:1px;background:#dadada"></div>
<div class="a" style="left:36px;top:402px;width:1859px;height:1px;background:#dadada"></div>
<div class="a" style="left:36px;top:424px;width:1859px;height:1px;background:#dadada"></div>
<div class="a" style="left:36px;top:446px;width:1859px;height:1px;background:#dadada"></div>
<div class="a" style="left:36px;top:468px;width:1859px;height:1px;background:#dadada"></div>
<div class="a" style="left:36px;top:490px;width:1859px;height:1px;background:#dadada"></div>
<div class="a" style="left:36px;top:513px;width:1859px;height:1px;background:#dadada"></div>
<div class="a" style="left:36px;top:536px;width:1859px;height:1px;background:#dadada"></div>
<div class="a" style="left:36px;top:559px;width:1859px;height:1px;background:#dadada"></div>
<div class="a" style="left:36px;top:582px;width:1859px;height:1px;background:#dadada"></div>
<div class="a" style="left:36px;top:605px;width:1859px;height:1px;background:#dadada"></div>
<div class="a" style="left:36px;top:628px;width:1859px;height:1px;background:#dadada"></div>
<div class="a" style="left:36px;top:651px;width:1859px;height:1px;background:#dadada"></div>
<div class="a" style="left:36px;top:674px;width:1859px;height:1px;background:#dadada"></div>
<div class="a" style="left:36px;top:697px;width:1859px;height:1px;background:#dadada"></div>
<div class="a" style="left:36px;top:720px;width:1859px;height:1px;background:#dadada"></div>
<div class="a" style="left:36px;top:743px;width:1859px;height:1px;background:#dadada"></div>
<div class="a" style="left:36px;top:766px;width:1859px;height:1px;background:#dadada"></div>
<div class="a" style="left:36px;top:789px;width:1859px;height:1px;background:#dadada"></div>
<div class="a" style="left:36px;top:812px;width:1859px;height:1px;background:#dadada"></div>
<div class="a" style="left:36px;top:835px;width:1859px;height:1px;background:#dadada"></div>
<div class="a" style="left:36px;top:858px;width:1859px;height:1px;background:#dadada"></div>
<div class="a" style="left:36px;top:881px;width:1859px;height:1px;background:#dadada"></div>
<div class="a" style="left:36px;top:904px;width:1859px;height:1px;background:#dadada"></div>
<div class="a" style="left:36px;top:927px;width:1859px;height:1px;background:#dadada"></div>
<div class="a" style="left:36px;top:950px;width:1859px;height:1px;background:#dadada"></div>
<div class="a" style="left:36px;top:973px;width:1859px;height:1px;background:#dadada"></div>
<div class="a" style="left:36px;top:996px;width:1859px;height:1px;background:#dadada"></div>
<div class="a" style="left:36px;top:270px;width:79px;height:22px;overflow:hidden"></div>
<div class="a" style="left:36px;top:270px;width:79px;height:22px;overflow:hidden"><div class="t" style="left:0;width:79px;top:3px;text-align:center;font-size:17.5px;color:#000;-webkit-text-stroke:0.2px #000">A</div></div>
<div class="a" style="left:115px;top:270px;width:165px;height:22px;overflow:hidden"></div>
<div class="a" style="left:115px;top:270px;width:165px;height:22px;overflow:hidden"><div class="t" style="left:0;width:165px;top:3px;text-align:center;font-size:17.5px;color:#000;-webkit-text-stroke:0.2px #000">B</div></div>
<div class="a" style="left:115px;top:270px;width:1px;height:22px;background:#b9b9b9"></div>
<div class="a" style="left:280px;top:270px;width:101px;height:22px;overflow:hidden"></div>
<div class="a" style="left:280px;top:270px;width:101px;height:22px;overflow:hidden"><div class="t" style="left:0;width:101px;top:3px;text-align:center;font-size:17.5px;color:#000;-webkit-text-stroke:0.2px #000">C</div></div>
<div class="a" style="left:280px;top:270px;width:1px;height:22px;background:#b9b9b9"></div>
<div class="a" style="left:381px;top:270px;width:79px;height:22px;overflow:hidden"></div>
<div class="a" style="left:381px;top:270px;width:79px;height:22px;overflow:hidden"><div class="t" style="left:0;width:79px;top:3px;text-align:center;font-size:17.5px;color:#000;-webkit-text-stroke:0.2px #000">D</div></div>
<div class="a" style="left:381px;top:270px;width:1px;height:22px;background:#b9b9b9"></div>
<div class="a" style="left:460px;top:270px;width:79px;height:22px;overflow:hidden"></div>
<div class="a" style="left:460px;top:270px;width:79px;height:22px;overflow:hidden"><div class="t" style="left:0;width:79px;top:3px;text-align:center;font-size:17.5px;color:#000;-webkit-text-stroke:0.2px #000">E</div></div>
<div class="a" style="left:460px;top:270px;width:1px;height:22px;background:#b9b9b9"></div>
<div class="a" style="left:539px;top:270px;width:79px;height:22px;overflow:hidden"></div>
<div class="a" style="left:539px;top:270px;width:79px;height:22px;overflow:hidden"><div class="t" style="left:0;width:79px;top:3px;text-align:center;font-size:17.5px;color:#000;-webkit-text-stroke:0.2px #000">F</div></div>
<div class="a" style="left:539px;top:270px;width:1px;height:22px;background:#b9b9b9"></div>
<div class="a" style="left:618px;top:270px;width:111px;height:22px;overflow:hidden"></div>
<div class="a" style="left:618px;top:270px;width:111px;height:22px;overflow:hidden"><div class="t" style="left:0;width:111px;top:3px;text-align:center;font-size:17.5px;color:#000;-webkit-text-stroke:0.2px #000">G</div></div>
<div class="a" style="left:618px;top:270px;width:1px;height:22px;background:#b9b9b9"></div>
<div class="a" style="left:729px;top:270px;width:126px;height:22px;overflow:hidden"></div>
<div class="a" style="left:729px;top:270px;width:126px;height:22px;overflow:hidden"><div class="t" style="left:0;width:126px;top:3px;text-align:center;font-size:17.5px;color:#000;-webkit-text-stroke:0.2px #000">H</div></div>
<div class="a" style="left:729px;top:270px;width:1px;height:22px;background:#b9b9b9"></div>
<div class="a" style="left:855px;top:270px;width:111px;height:22px;background:#d3d3d3;overflow:hidden"></div>
<div class="a" style="left:855px;top:270px;width:111px;height:22px;overflow:hidden"><div class="t" style="left:0;width:111px;top:3px;text-align:center;font-size:17.5px;color:#0e5c2f;-webkit-text-stroke:0.2px #0e5c2f">I</div></div>
<div class="a" style="left:855px;top:270px;width:1px;height:22px;background:#b9b9b9"></div>
<div class="a" style="left:966px;top:270px;width:111px;height:22px;overflow:hidden"></div>
<div class="a" style="left:966px;top:270px;width:111px;height:22px;overflow:hidden"><div class="t" style="left:0;width:111px;top:3px;text-align:center;font-size:17.5px;color:#000;-webkit-text-stroke:0.2px #000">J</div></div>
<div class="a" style="left:966px;top:270px;width:1px;height:22px;background:#b9b9b9"></div>
<div class="a" style="left:1077px;top:270px;width:120px;height:22px;overflow:hidden"></div>
<div class="a" style="left:1077px;top:270px;width:120px;height:22px;overflow:hidden"><div class="t" style="left:0;width:120px;top:3px;text-align:center;font-size:17.5px;color:#000;-webkit-text-stroke:0.2px #000">K</div></div>
<div class="a" style="left:1077px;top:270px;width:1px;height:22px;background:#b9b9b9"></div>
<div class="a" style="left:1197px;top:270px;width:111px;height:22px;overflow:hidden"></div>
<div class="a" style="left:1197px;top:270px;width:111px;height:22px;overflow:hidden"><div class="t" style="left:0;width:111px;top:3px;text-align:center;font-size:17.5px;color:#000;-webkit-text-stroke:0.2px #000">L</div></div>
<div class="a" style="left:1197px;top:270px;width:1px;height:22px;background:#b9b9b9"></div>
<div class="a" style="left:1308px;top:270px;width:120px;height:22px;overflow:hidden"></div>
<div class="a" style="left:1308px;top:270px;width:120px;height:22px;overflow:hidden"><div class="t" style="left:0;width:120px;top:3px;text-align:center;font-size:17.5px;color:#000;-webkit-text-stroke:0.2px #000">M</div></div>
<div class="a" style="left:1308px;top:270px;width:1px;height:22px;background:#b9b9b9"></div>
<div class="a" style="left:1428px;top:270px;width:111px;height:22px;overflow:hidden"></div>
<div class="a" style="left:1428px;top:270px;width:111px;height:22px;overflow:hidden"><div class="t" style="left:0;width:111px;top:3px;text-align:center;font-size:17.5px;color:#000;-webkit-text-stroke:0.2px #000">N</div></div>
<div class="a" style="left:1428px;top:270px;width:1px;height:22px;background:#b9b9b9"></div>
<div class="a" style="left:1539px;top:270px;width:79px;height:22px;overflow:hidden"></div>
<div class="a" style="left:1539px;top:270px;width:79px;height:22px;overflow:hidden"><div class="t" style="left:0;width:79px;top:3px;text-align:center;font-size:17.5px;color:#000;-webkit-text-stroke:0.2px #000">O</div></div>
<div class="a" style="left:1539px;top:270px;width:1px;height:22px;background:#b9b9b9"></div>
<div class="a" style="left:1618px;top:270px;width:79px;height:22px;overflow:hidden"></div>
<div class="a" style="left:1618px;top:270px;width:79px;height:22px;overflow:hidden"><div class="t" style="left:0;width:79px;top:3px;text-align:center;font-size:17.5px;color:#000;-webkit-text-stroke:0.2px #000">P</div></div>
<div class="a" style="left:1618px;top:270px;width:1px;height:22px;background:#b9b9b9"></div>
<div class="a" style="left:1697px;top:270px;width:79px;height:22px;overflow:hidden"></div>
<div class="a" style="left:1697px;top:270px;width:79px;height:22px;overflow:hidden"><div class="t" style="left:0;width:79px;top:3px;text-align:center;font-size:17.5px;color:#000;-webkit-text-stroke:0.2px #000">Q</div></div>
<div class="a" style="left:1697px;top:270px;width:1px;height:22px;background:#b9b9b9"></div>
<div class="a" style="left:1776px;top:270px;width:79px;height:22px;overflow:hidden"></div>
<div class="a" style="left:1776px;top:270px;width:79px;height:22px;overflow:hidden"><div class="t" style="left:0;width:79px;top:3px;text-align:center;font-size:17.5px;color:#000;-webkit-text-stroke:0.2px #000">R</div></div>
<div class="a" style="left:1776px;top:270px;width:1px;height:22px;background:#b9b9b9"></div>
<div class="a" style="left:1855px;top:270px;width:40px;height:22px;overflow:hidden"></div>
<div class="a" style="left:1855px;top:270px;width:40px;height:22px;overflow:hidden"><div class="t" style="left:0;width:79px;top:3px;text-align:center;font-size:17.5px;color:#000;-webkit-text-stroke:0.2px #000">S</div></div>
<div class="a" style="left:1855px;top:270px;width:1px;height:22px;background:#b9b9b9"></div>
<div class="a" style="left:855px;top:290px;width:112px;height:2px;background:#107c41"></div>
<div class="a" style="left:0;top:292px;width:1895px;height:1px;background:#a8a8a8"></div>
<div class="a" style="left:36px;top:270px;width:1px;height:742px;background:#a8a8a8"></div>
<div class="a" style="left:0;top:314px;width:36px;height:1px;background:#c4c4c4"></div>
<div class="a" style="left:0;top:292px;width:36px;height:22px;overflow:hidden"><div class="t" style="left:0;width:36px;top:4px;text-align:center;font-size:17.5px;color:#000;-webkit-text-stroke:0.2px #000">11</div></div>
<div class="a" style="left:0;top:336px;width:36px;height:1px;background:#c4c4c4"></div>
<div class="a" style="left:0;top:314px;width:36px;height:22px;overflow:hidden"><div class="t" style="left:0;width:36px;top:4px;text-align:center;font-size:17.5px;color:#000;-webkit-text-stroke:0.2px #000">12</div></div>
<div class="a" style="left:0;top:358px;width:36px;height:1px;background:#c4c4c4"></div>
<div class="a" style="left:0;top:336px;width:36px;height:22px;overflow:hidden"><div class="t" style="left:0;width:36px;top:4px;text-align:center;font-size:17.5px;color:#000;-webkit-text-stroke:0.2px #000">13</div></div>
<div class="a" style="left:0;top:380px;width:36px;height:1px;background:#c4c4c4"></div>
<div class="a" style="left:0;top:358px;width:36px;height:22px;overflow:hidden"><div class="t" style="left:0;width:36px;top:4px;text-align:center;font-size:17.5px;color:#000;-webkit-text-stroke:0.2px #000">14</div></div>
<div class="a" style="left:0;top:402px;width:36px;height:1px;background:#c4c4c4"></div>
<div class="a" style="left:0;top:380px;width:36px;height:22px;overflow:hidden"><div class="t" style="left:0;width:36px;top:4px;text-align:center;font-size:17.5px;color:#000;-webkit-text-stroke:0.2px #000">15</div></div>
<div class="a" style="left:0;top:424px;width:36px;height:1px;background:#c4c4c4"></div>
<div class="a" style="left:0;top:402px;width:36px;height:22px;overflow:hidden"><div class="t" style="left:0;width:36px;top:4px;text-align:center;font-size:17.5px;color:#000;-webkit-text-stroke:0.2px #000">16</div></div>
<div class="a" style="left:0;top:446px;width:36px;height:1px;background:#c4c4c4"></div>
<div class="a" style="left:0;top:424px;width:36px;height:22px;overflow:hidden"><div class="t" style="left:0;width:36px;top:4px;text-align:center;font-size:17.5px;color:#000;-webkit-text-stroke:0.2px #000">17</div></div>
<div class="a" style="left:0;top:468px;width:36px;height:1px;background:#c4c4c4"></div>
<div class="a" style="left:0;top:446px;width:36px;height:22px;overflow:hidden"><div class="t" style="left:0;width:36px;top:4px;text-align:center;font-size:17.5px;color:#000;-webkit-text-stroke:0.2px #000">18</div></div>
<div class="a" style="left:0;top:490px;width:36px;height:1px;background:#c4c4c4"></div>
<div class="a" style="left:0;top:468px;width:36px;height:22px;overflow:hidden"><div class="t" style="left:0;width:36px;top:4px;text-align:center;font-size:17.5px;color:#000;-webkit-text-stroke:0.2px #000">19</div></div>
<div class="a" style="left:0;top:513px;width:36px;height:1px;background:#c4c4c4"></div>
<div class="a" style="left:0;top:490px;width:36px;height:23px;overflow:hidden"><div class="t" style="left:0;width:36px;top:4px;text-align:center;font-size:17.5px;color:#000;-webkit-text-stroke:0.2px #000">20</div></div>
<div class="a" style="left:0;top:536px;width:36px;height:1px;background:#c4c4c4"></div>
<div class="a" style="left:0;top:513px;width:36px;height:23px;overflow:hidden"><div class="t" style="left:0;width:36px;top:4px;text-align:center;font-size:17.5px;color:#000;-webkit-text-stroke:0.2px #000">21</div></div>
<div class="a" style="left:0;top:559px;width:36px;height:1px;background:#c4c4c4"></div>
<div class="a" style="left:0;top:536px;width:36px;height:23px;overflow:hidden"><div class="t" style="left:0;width:36px;top:4px;text-align:center;font-size:17.5px;color:#000;-webkit-text-stroke:0.2px #000">22</div></div>
<div class="a" style="left:0;top:582px;width:36px;height:1px;background:#c4c4c4"></div>
<div class="a" style="left:0;top:559px;width:36px;height:23px;overflow:hidden"><div class="t" style="left:0;width:36px;top:4px;text-align:center;font-size:17.5px;color:#000;-webkit-text-stroke:0.2px #000">23</div></div>
<div class="a" style="left:0;top:605px;width:36px;height:1px;background:#c4c4c4"></div>
<div class="a" style="left:0;top:582px;width:36px;height:23px;overflow:hidden"><div class="t" style="left:0;width:36px;top:4px;text-align:center;font-size:17.5px;color:#000;-webkit-text-stroke:0.2px #000">24</div></div>
<div class="a" style="left:0;top:606px;width:36px;height:23px;background:#d3d3d3"></div>
<div class="a" style="left:35px;top:606px;width:2px;height:23px;background:#107c41"></div>
<div class="a" style="left:0;top:628px;width:36px;height:1px;background:#c4c4c4"></div>
<div class="a" style="left:0;top:605px;width:36px;height:23px;overflow:hidden"><div class="t" style="left:0;width:36px;top:4px;text-align:center;font-size:17.5px;color:#0e5c2f;-webkit-text-stroke:0.2px #0e5c2f">25</div></div>
<div class="a" style="left:0;top:651px;width:36px;height:1px;background:#c4c4c4"></div>
<div class="a" style="left:0;top:628px;width:36px;height:23px;overflow:hidden"><div class="t" style="left:0;width:36px;top:4px;text-align:center;font-size:17.5px;color:#000;-webkit-text-stroke:0.2px #000">26</div></div>
<div class="a" style="left:0;top:674px;width:36px;height:1px;background:#c4c4c4"></div>
<div class="a" style="left:0;top:651px;width:36px;height:23px;overflow:hidden"><div class="t" style="left:0;width:36px;top:4px;text-align:center;font-size:17.5px;color:#000;-webkit-text-stroke:0.2px #000">27</div></div>
<div class="a" style="left:0;top:697px;width:36px;height:1px;background:#c4c4c4"></div>
<div class="a" style="left:0;top:674px;width:36px;height:23px;overflow:hidden"><div class="t" style="left:0;width:36px;top:4px;text-align:center;font-size:17.5px;color:#000;-webkit-text-stroke:0.2px #000">28</div></div>
<div class="a" style="left:0;top:720px;width:36px;height:1px;background:#c4c4c4"></div>
<div class="a" style="left:0;top:697px;width:36px;height:23px;overflow:hidden"><div class="t" style="left:0;width:36px;top:4px;text-align:center;font-size:17.5px;color:#000;-webkit-text-stroke:0.2px #000">29</div></div>
<div class="a" style="left:0;top:743px;width:36px;height:1px;background:#c4c4c4"></div>
<div class="a" style="left:0;top:720px;width:36px;height:23px;overflow:hidden"><div class="t" style="left:0;width:36px;top:4px;text-align:center;font-size:17.5px;color:#000;-webkit-text-stroke:0.2px #000">30</div></div>
<div class="a" style="left:0;top:766px;width:36px;height:1px;background:#c4c4c4"></div>
<div class="a" style="left:0;top:743px;width:36px;height:23px;overflow:hidden"><div class="t" style="left:0;width:36px;top:4px;text-align:center;font-size:17.5px;color:#000;-webkit-text-stroke:0.2px #000">31</div></div>
<div class="a" style="left:0;top:789px;width:36px;height:1px;background:#c4c4c4"></div>
<div class="a" style="left:0;top:766px;width:36px;height:23px;overflow:hidden"><div class="t" style="left:0;width:36px;top:4px;text-align:center;font-size:17.5px;color:#000;-webkit-text-stroke:0.2px #000">32</div></div>
<div class="a" style="left:0;top:812px;width:36px;height:1px;background:#c4c4c4"></div>
<div class="a" style="left:0;top:789px;width:36px;height:23px;overflow:hidden"><div class="t" style="left:0;width:36px;top:4px;text-align:center;font-size:17.5px;color:#000;-webkit-text-stroke:0.2px #000">33</div></div>
<div class="a" style="left:0;top:835px;width:36px;height:1px;background:#c4c4c4"></div>
<div class="a" style="left:0;top:812px;width:36px;height:23px;overflow:hidden"><div class="t" style="left:0;width:36px;top:4px;text-align:center;font-size:17.5px;color:#000;-webkit-text-stroke:0.2px #000">34</div></div>
<div class="a" style="left:0;top:858px;width:36px;height:1px;background:#c4c4c4"></div>
<div class="a" style="left:0;top:835px;width:36px;height:23px;overflow:hidden"><div class="t" style="left:0;width:36px;top:4px;text-align:center;font-size:17.5px;color:#000;-webkit-text-stroke:0.2px #000">35</div></div>
<div class="a" style="left:0;top:881px;width:36px;height:1px;background:#c4c4c4"></div>
<div class="a" style="left:0;top:858px;width:36px;height:23px;overflow:hidden"><div class="t" style="left:0;width:36px;top:4px;text-align:center;font-size:17.5px;color:#000;-webkit-text-stroke:0.2px #000">36</div></div>
<div class="a" style="left:0;top:904px;width:36px;height:1px;background:#c4c4c4"></div>
<div class="a" style="left:0;top:881px;width:36px;height:23px;overflow:hidden"><div class="t" style="left:0;width:36px;top:4px;text-align:center;font-size:17.5px;color:#000;-webkit-text-stroke:0.2px #000">37</div></div>
<div class="a" style="left:0;top:927px;width:36px;height:1px;background:#c4c4c4"></div>
<div class="a" style="left:0;top:904px;width:36px;height:23px;overflow:hidden"><div class="t" style="left:0;width:36px;top:4px;text-align:center;font-size:17.5px;color:#000;-webkit-text-stroke:0.2px #000">38</div></div>
<div class="a" style="left:0;top:950px;width:36px;height:1px;background:#c4c4c4"></div>
<div class="a" style="left:0;top:927px;width:36px;height:23px;overflow:hidden"><div class="t" style="left:0;width:36px;top:4px;text-align:center;font-size:17.5px;color:#000;-webkit-text-stroke:0.2px #000">39</div></div>
<div class="a" style="left:0;top:973px;width:36px;height:1px;background:#c4c4c4"></div>
<div class="a" style="left:0;top:950px;width:36px;height:23px;overflow:hidden"><div class="t" style="left:0;width:36px;top:4px;text-align:center;font-size:17.5px;color:#000;-webkit-text-stroke:0.2px #000">40</div></div>
<div class="a" style="left:0;top:996px;width:36px;height:1px;background:#c4c4c4"></div>
<div class="a" style="left:0;top:973px;width:36px;height:23px;overflow:hidden"><div class="t" style="left:0;width:36px;top:4px;text-align:center;font-size:17.5px;color:#000;-webkit-text-stroke:0.2px #000">41</div></div>
<div class="a" style="left:0;top:996px;width:36px;height:23px;overflow:hidden"><div class="t" style="left:0;width:36px;top:4px;text-align:center;font-size:17.5px;color:#000;-webkit-text-stroke:0.2px #000">42</div></div>
<div class="a" style="left:36px;top:336px;width:346px;height:89px;background:#ddebf7"></div>
<div class="a" style="left:36px;top:490px;width:346px;height:24px;background:#ddebf7"></div>
<div class="a" style="left:36px;top:651px;width:346px;height:139px;background:#ddebf7"></div>
<div class="a" style="left:36px;top:314px;width:346px;height:1px;background:#000"></div>
<div class="a" style="left:36px;top:336px;width:346px;height:1px;background:#000"></div>
<div class="a" style="left:36px;top:358px;width:346px;height:1px;background:#000"></div>
<div class="a" style="left:36px;top:380px;width:346px;height:1px;background:#000"></div>
<div class="a" style="left:36px;top:402px;width:346px;height:1px;background:#000"></div>
<div class="a" style="left:36px;top:424px;width:346px;height:1px;background:#000"></div>
<div class="a" style="left:36px;top:292px;width:1px;height:133px;background:#000"></div>
<div class="a" style="left:381px;top:292px;width:1px;height:133px;background:#000"></div>
<div class="a" style="left:280px;top:292px;width:1px;height:133px;background:#000"></div>
<div class="a" style="left:115px;top:292px;width:1px;height:45px;background:#000"></div>
<div class="a" style="left:36px;top:490px;width:346px;height:1px;background:#000"></div>
<div class="a" style="left:36px;top:513px;width:346px;height:1px;background:#000"></div>
<div class="a" style="left:36px;top:536px;width:346px;height:1px;background:#000"></div>
<div class="a" style="left:36px;top:559px;width:346px;height:1px;background:#000"></div>
<div class="a" style="left:36px;top:582px;width:346px;height:1px;background:#000"></div>
<div class="a" style="left:36px;top:605px;width:346px;height:1px;background:#000"></div>
<div class="a" style="left:36px;top:628px;width:346px;height:1px;background:#000"></div>
<div class="a" style="left:36px;top:651px;width:346px;height:1px;background:#000"></div>
<div class="a" style="left:36px;top:674px;width:346px;height:1px;background:#000"></div>
<div class="a" style="left:36px;top:697px;width:346px;height:1px;background:#000"></div>
<div class="a" style="left:36px;top:720px;width:346px;height:1px;background:#000"></div>
<div class="a" style="left:36px;top:743px;width:346px;height:1px;background:#000"></div>
<div class="a" style="left:36px;top:766px;width:346px;height:1px;background:#000"></div>
<div class="a" style="left:36px;top:789px;width:346px;height:1px;background:#000"></div>
<div class="a" style="left:36px;top:490px;width:1px;height:300px;background:#000"></div>
<div class="a" style="left:381px;top:490px;width:1px;height:300px;background:#000"></div>
<div class="a" style="left:280px;top:490px;width:1px;height:300px;background:#000"></div>
<div class="a" style="left:115px;top:490px;width:1px;height:162px;background:#000"></div>
<div class="a" style="left:539px;top:535px;width:191px;height:2px;background:#000"></div>
<div class="a" style="left:539px;top:559px;width:191px;height:1px;background:#000"></div>
<div class="a" style="left:539px;top:674px;width:191px;height:2px;background:#000"></div>
<div class="a" style="left:539px;top:719px;width:659px;height:2px;background:#000"></div>
<div class="a" style="left:539px;top:743px;width:659px;height:1px;background:#000"></div>
<div class="a" style="left:539px;top:812px;width:659px;height:2px;background:#000"></div>
<div class="a" style="left:539px;top:834px;width:1001px;height:2px;background:#000"></div>
<div class="a" style="left:539px;top:858px;width:1001px;height:1px;background:#000"></div>
<div class="a" style="left:539px;top:904px;width:1001px;height:2px;background:#000"></div>
<div class="cell num" style="left:36px;top:292px;width:79px;height:22px;overflow:hidden;"><div class="t" style="right:3px;top:4px;">9</div></div>
<div class="cell" style="left:115px;top:292px;width:165px;height:22px;overflow:hidden;"><div class="t" style="left:4px;top:4px;">Blanko</div></div>
<div class="cell num" style="left:280px;top:292px;width:101px;height:22px;overflow:hidden;"><div class="t" style="left:0;width:101px;text-align:center;top:4px;">32257</div></div>
<div class="cell num" style="left:36px;top:314px;width:79px;height:22px;overflow:hidden;"><div class="t" style="right:3px;top:4px;">10</div></div>
<div class="cell" style="left:115px;top:314px;width:165px;height:22px;overflow:hidden;"><div class="t" style="left:4px;top:4px;">Blanko</div></div>
<div class="cell num" style="left:280px;top:314px;width:101px;height:22px;overflow:hidden;"><div class="t" style="left:0;width:101px;text-align:center;top:4px;">57253</div></div>
<div class="cell" style="left:36px;top:336px;width:244px;height:22px;overflow:hidden;"><div class="t" style="left:0;width:244px;text-align:center;top:4px;">SD</div></div>
<div class="cell num" style="left:280px;top:336px;width:101px;height:22px;overflow:hidden;"><div class="t" style="right:7px;top:4px;">11138,1506</div></div>
<div class="cell" style="left:36px;top:358px;width:244px;height:22px;overflow:hidden;"><div class="t" style="left:0;width:244px;text-align:center;top:4px;">σ</div></div>
<div class="cell num" style="left:280px;top:358px;width:101px;height:22px;overflow:hidden;"><div class="t" style="right:7px;top:4px;">11138,1506</div></div>
<div class="cell" style="left:36px;top:380px;width:244px;height:22px;overflow:hidden;"><div class="t" style="left:0;width:244px;text-align:center;top:4px;">LOD</div></div>
<div class="cell num" style="left:280px;top:380px;width:101px;height:22px;overflow:hidden;"><div class="t" style="right:7px;top:4px;">0,3066</div></div>
<div class="cell" style="left:36px;top:402px;width:244px;height:22px;overflow:hidden;"><div class="t" style="left:0;width:244px;text-align:center;top:4px;">LOQ</div></div>
<div class="cell num" style="left:280px;top:402px;width:101px;height:22px;overflow:hidden;"><div class="t" style="right:7px;top:4px;">0,9290</div></div>
<div class="cell" style="left:381px;top:380px;width:79px;height:22px;"><div class="t" style="left:4px;top:4px;">µg/mL</div></div>
<div class="cell" style="left:381px;top:402px;width:79px;height:22px;"><div class="t" style="left:4px;top:4px;">µg/mL</div></div>
<div class="cell" style="left:36px;top:490px;width:79px;height:23px;overflow:hidden;"><div class="t" style="left:4px;top:5px;">No</div></div>
<div class="cell" style="left:115px;top:490px;width:165px;height:23px;overflow:hidden;"><div class="t" style="left:4px;top:5px;">Konsentrasi (mg/mL)</div></div>
<div class="cell" style="left:280px;top:490px;width:101px;height:23px;overflow:hidden;"><div class="t" style="left:4px;top:5px;">Respon Area</div></div>
<div class="cell num" style="left:36px;top:513px;width:79px;height:23px;overflow:hidden;"><div class="t" style="right:4px;top:5px;">1</div></div>
<div class="cell num" style="left:115px;top:513px;width:165px;height:23px;overflow:hidden;"><div class="t" style="right:4px;top:5px;">5</div></div>
<div class="cell num" style="left:280px;top:513px;width:101px;height:23px;overflow:hidden;"><div class="t" style="left:0;width:101px;text-align:center;top:5px;">616112</div></div>
<div class="cell num" style="left:36px;top:536px;width:79px;height:23px;overflow:hidden;"><div class="t" style="right:4px;top:5px;">2</div></div>
<div class="cell num" style="left:115px;top:536px;width:165px;height:23px;overflow:hidden;"><div class="t" style="right:4px;top:5px;">10</div></div>
<div class="cell num" style="left:280px;top:536px;width:101px;height:23px;overflow:hidden;"><div class="t" style="left:0;width:101px;text-align:center;top:5px;">1227178</div></div>
<div class="cell num" style="left:36px;top:559px;width:79px;height:23px;overflow:hidden;"><div class="t" style="right:4px;top:5px;">3</div></div>
<div class="cell num" style="left:115px;top:559px;width:165px;height:23px;overflow:hidden;"><div class="t" style="right:4px;top:5px;">15</div></div>
<div class="cell num" style="left:280px;top:559px;width:101px;height:23px;overflow:hidden;"><div class="t" style="left:0;width:101px;text-align:center;top:5px;">1805559</div></div>
<div class="cell num" style="left:36px;top:582px;width:79px;height:23px;overflow:hidden;"><div class="t" style="right:4px;top:5px;">4</div></div>
<div class="cell num" style="left:115px;top:582px;width:165px;height:23px;overflow:hidden;"><div class="t" style="right:4px;top:5px;">20</div></div>
<div class="cell num" style="left:280px;top:582px;width:101px;height:23px;overflow:hidden;"><div class="t" style="left:0;width:101px;text-align:center;top:5px;">2464554</div></div>
<div class="cell num" style="left:36px;top:605px;width:79px;height:23px;overflow:hidden;"><div class="t" style="right:4px;top:5px;">5</div></div>
<div class="cell num" style="left:115px;top:605px;width:165px;height:23px;overflow:hidden;"><div class="t" style="right:4px;top:5px;">25</div></div>
<div class="cell num" style="left:280px;top:605px;width:101px;height:23px;overflow:hidden;"><div class="t" style="left:0;width:101px;text-align:center;top:5px;">3061370</div></div>
<div class="cell num" style="left:36px;top:628px;width:79px;height:23px;overflow:hidden;"><div class="t" style="right:4px;top:5px;">6</div></div>
<div class="cell num" style="left:115px;top:628px;width:165px;height:23px;overflow:hidden;"><div class="t" style="right:4px;top:5px;">30</div></div>
<div class="cell num" style="left:280px;top:628px;width:101px;height:23px;overflow:hidden;"><div class="t" style="left:0;width:101px;text-align:center;top:5px;">3580148</div></div>
<div class="cell" style="left:36px;top:651px;width:244px;height:23px;overflow:hidden;"><div class="t" style="right:6px;top:5px;font-style:italic;letter-spacing:.3px">slope</div></div>
<div class="cell num" style="left:280px;top:651px;width:101px;height:23px;overflow:hidden;"><div class="t" style="right:4px;top:5px;">119895,699</div></div>
<div class="cell" style="left:36px;top:674px;width:244px;height:23px;overflow:hidden;"><div class="t" style="right:6px;top:5px;font-style:italic;letter-spacing:.3px">Intercept</div></div>
<div class="cell num" style="left:280px;top:674px;width:101px;height:23px;overflow:hidden;"><div class="t" style="right:8px;top:5px;">27645,3091</div></div>
<div class="cell" style="left:36px;top:697px;width:244px;height:23px;overflow:hidden;"><div class="t" style="right:6px;top:5px;font-style:italic;letter-spacing:.3px">Coef.Correlation</div></div>
<div class="cell num" style="left:280px;top:697px;width:101px;height:23px;overflow:hidden;"><div class="t" style="right:8px;top:5px;">0,9996</div></div>
<div class="cell" style="left:36px;top:720px;width:244px;height:23px;overflow:hidden;"><div class="t" style="right:4px;top:5px;">SD of intercept (σ)</div></div>
<div class="cell num" style="left:280px;top:720px;width:101px;height:23px;overflow:hidden;"><div class="t" style="right:8px;top:5px;">34052,5236</div></div>
<div class="cell" style="left:36px;top:743px;width:244px;height:23px;overflow:hidden;"><div class="t" style="right:4px;top:5px;">LOD</div></div>
<div class="cell num" style="left:280px;top:743px;width:101px;height:23px;overflow:hidden;"><div class="t" style="right:8px;top:5px;">0,9373</div></div>
<div class="cell" style="left:36px;top:766px;width:244px;height:23px;overflow:hidden;"><div class="t" style="right:4px;top:5px;">LOQ</div></div>
<div class="cell num" style="left:280px;top:766px;width:101px;height:23px;overflow:hidden;"><div class="t" style="right:8px;top:5px;">2,8402</div></div>
<div class="cell" style="left:381px;top:743px;width:79px;height:23px;"><div class="t" style="left:4px;top:5px;">µg/mL</div></div>
<div class="cell" style="left:381px;top:766px;width:79px;height:23px;"><div class="t" style="left:4px;top:5px;">µg/mL</div></div>
<div class="cell" style="left:539px;top:490px;width:190px;height:23px;overflow:hidden;"><div class="t" style="left:0;width:190px;text-align:center;top:5px;font-weight:bold;font-size:16.3px;margin-top:1px">SUMMARY OUTPUT</div></div>
<div class="cell" style="left:539px;top:536px;width:190px;height:23px;overflow:hidden;"><div class="t" style="left:0;width:190px;text-align:center;top:5px;font-style:italic;letter-spacing:.3px">Regression Statistics</div></div>
<div class="cell" style="left:539px;top:559px;width:79px;height:23px;overflow:hidden;"><div class="t" style="left:4px;top:5px;">Multiple R</div></div>
<div class="cell num" style="left:618px;top:559px;width:111px;height:23px;overflow:hidden;"><div class="t" style="right:3px;top:5px;">0,99957478</div></div>
<div class="cell" style="left:539px;top:582px;width:79px;height:23px;overflow:hidden;"><div class="t" style="left:4px;top:5px;">R Square</div></div>
<div class="cell num" style="left:618px;top:582px;width:111px;height:23px;overflow:hidden;"><div class="t" style="right:3px;top:5px;">0,99914974</div></div>
<div class="cell" style="left:539px;top:605px;width:79px;height:23px;overflow:hidden;"><div class="t" style="left:4px;top:5px;">Adjusted R</div></div>
<div class="cell num" style="left:618px;top:605px;width:111px;height:23px;overflow:hidden;"><div class="t" style="right:3px;top:5px;">0,998937175</div></div>
<div class="cell" style="left:539px;top:628px;width:79px;height:23px;overflow:hidden;"><div class="t" style="left:4px;top:5px;letter-spacing:-0.35px">Standard Error</div></div>
<div class="cell num" style="left:618px;top:628px;width:111px;height:23px;overflow:hidden;"><div class="t" style="right:3px;top:5px;">36578,27802</div></div>
<div class="cell" style="left:539px;top:651px;width:79px;height:23px;overflow:hidden;"><div class="t" style="left:4px;top:5px;letter-spacing:-0.35px">Observations</div></div>
<div class="cell num" style="left:618px;top:651px;width:111px;height:23px;overflow:hidden;"><div class="t" style="right:3px;top:5px;">6</div></div>
<div class="cell" style="left:539px;top:697px;width:79px;height:23px;"><div class="t" style="left:4px;top:5px;">ANOVA</div></div>
<div class="cell" style="left:618px;top:720px;width:111px;height:23px;overflow:hidden;"><div class="t" style="left:0;width:111px;text-align:center;top:5px;font-style:italic;letter-spacing:.3px">df</div></div>
<div class="cell" style="left:729px;top:720px;width:126px;height:23px;overflow:hidden;"><div class="t" style="left:0;width:126px;text-align:center;top:5px;font-style:italic;letter-spacing:.3px">SS</div></div>
<div class="cell" style="left:855px;top:720px;width:111px;height:23px;overflow:hidden;"><div class="t" style="left:0;width:111px;text-align:center;top:5px;font-style:italic;letter-spacing:.3px">MS</div></div>
<div class="cell" style="left:966px;top:720px;width:111px;height:23px;overflow:hidden;"><div class="t" style="left:0;width:111px;text-align:center;top:5px;font-style:italic;letter-spacing:.3px">F</div></div>
<div class="cell" style="left:1077px;top:720px;width:120px;height:23px;overflow:hidden;"><div class="t" style="left:0;width:120px;text-align:center;top:5px;font-style:italic;letter-spacing:.3px">Significance F</div></div>
<div class="cell" style="left:539px;top:743px;width:79px;height:23px;overflow:hidden;"><div class="t" style="left:4px;top:5px;letter-spacing:0.35px">Regression</div></div>
<div class="cell num" style="left:618px;top:743px;width:111px;height:23px;overflow:hidden;"><div class="t" style="right:3px;top:5px;">1</div></div>
<div class="cell num" style="left:729px;top:743px;width:126px;height:23px;overflow:hidden;"><div class="t" style="right:3px;top:5px;">6,28905E+12</div></div>
<div class="cell num" style="left:855px;top:743px;width:111px;height:23px;overflow:hidden;"><div class="t" style="right:3px;top:5px;">6,28905E+12</div></div>
<div class="cell num" style="left:966px;top:743px;width:111px;height:23px;overflow:hidden;"><div class="t" style="right:3px;top:5px;">4700,442566</div></div>
<div class="cell num" style="left:1077px;top:743px;width:120px;height:23px;overflow:hidden;"><div class="t" style="right:3px;top:5px;">2,7118E-07</div></div>
<div class="cell" style="left:539px;top:766px;width:79px;height:23px;overflow:hidden;"><div class="t" style="left:4px;top:5px;">Residual</div></div>
<div class="cell num" style="left:618px;top:766px;width:111px;height:23px;overflow:hidden;"><div class="t" style="right:3px;top:5px;">4</div></div>
<div class="cell num" style="left:729px;top:766px;width:126px;height:23px;overflow:hidden;"><div class="t" style="right:3px;top:5px;">5351881692</div></div>
<div class="cell num" style="left:855px;top:766px;width:111px;height:23px;overflow:hidden;"><div class="t" style="right:3px;top:5px;">1337970423</div></div>
<div class="cell" style="left:539px;top:789px;width:79px;height:23px;overflow:hidden;"><div class="t" style="left:4px;top:5px;">Total</div></div>
<div class="cell num" style="left:618px;top:789px;width:111px;height:23px;overflow:hidden;"><div class="t" style="right:3px;top:5px;">5</div></div>
<div class="cell num" style="left:729px;top:789px;width:126px;height:23px;overflow:hidden;"><div class="t" style="right:3px;top:5px;">6,29441E+12</div></div>
<div class="cell" style="left:618px;top:835px;width:111px;height:23px;overflow:hidden;"><div class="t" style="left:0;width:111px;text-align:center;top:5px;font-style:italic;letter-spacing:.3px">Coefficients</div></div>
<div class="cell" style="left:729px;top:835px;width:126px;height:23px;overflow:hidden;"><div class="t" style="left:0;width:126px;text-align:center;top:5px;font-style:italic;letter-spacing:.3px">Standard Error</div></div>
<div class="cell" style="left:855px;top:835px;width:111px;height:23px;overflow:hidden;"><div class="t" style="left:0;width:111px;text-align:center;top:5px;font-style:italic;letter-spacing:.3px">t Stat</div></div>
<div class="cell" style="left:966px;top:835px;width:111px;height:23px;overflow:hidden;"><div class="t" style="left:0;width:111px;text-align:center;top:5px;font-style:italic;letter-spacing:.3px">P-value</div></div>
<div class="cell" style="left:1077px;top:835px;width:120px;height:23px;overflow:hidden;"><div class="t" style="left:0;width:120px;text-align:center;top:5px;font-style:italic;letter-spacing:.3px">Lower 95%</div></div>
<div class="cell" style="left:1197px;top:835px;width:111px;height:23px;overflow:hidden;"><div class="t" style="left:0;width:111px;text-align:center;top:5px;font-style:italic;letter-spacing:.3px">Upper 95%</div></div>
<div class="cell" style="left:1308px;top:835px;width:120px;height:23px;overflow:hidden;"><div class="t" style="left:0;width:120px;text-align:center;top:5px;font-style:italic;letter-spacing:.3px">Lower 95,0%</div></div>
<div class="cell" style="left:1428px;top:835px;width:111px;height:23px;overflow:hidden;"><div class="t" style="left:0;width:111px;text-align:center;top:5px;font-style:italic;letter-spacing:.3px">Upper 95,0%</div></div>
<div class="cell" style="left:539px;top:858px;width:79px;height:23px;overflow:hidden;"><div class="t" style="left:4px;top:5px;">Intercept</div></div>
<div class="cell num" style="left:618px;top:858px;width:111px;height:23px;overflow:hidden;"><div class="t" style="right:3px;top:5px;">27645,30914</div></div>
<div class="cell num" style="left:729px;top:858px;width:126px;height:23px;overflow:hidden;"><div class="t" style="right:3px;top:5px;font-weight:bold;color:#2a7bd0">34052,52365</div></div>
<div class="cell num" style="left:855px;top:858px;width:111px;height:23px;overflow:hidden;"><div class="t" style="right:3px;top:5px;">0,811843182</div></div>
<div class="cell num" style="left:966px;top:858px;width:111px;height:23px;overflow:hidden;"><div class="t" style="right:3px;top:5px;">0,462429497</div></div>
<div class="cell num" style="left:1077px;top:858px;width:120px;height:23px;overflow:hidden;"><div class="t" style="right:3px;top:5px;">-66899,65346</div></div>
<div class="cell num" style="left:1197px;top:858px;width:111px;height:23px;overflow:hidden;"><div class="t" style="right:3px;top:5px;">122190,2717</div></div>
<div class="cell num" style="left:1308px;top:858px;width:120px;height:23px;overflow:hidden;"><div class="t" style="right:3px;top:5px;">-66899,65346</div></div>
<div class="cell num" style="left:1428px;top:858px;width:111px;height:23px;overflow:hidden;"><div class="t" style="right:3px;top:5px;">122190,2717</div></div>
<div class="cell" style="left:539px;top:881px;width:79px;height:23px;overflow:hidden;"><div class="t" style="left:4px;top:5px;">X Variable</div></div>
<div class="cell num" style="left:618px;top:881px;width:111px;height:23px;overflow:hidden;"><div class="t" style="right:3px;top:5px;">119895,6988</div></div>
<div class="cell num" style="left:729px;top:881px;width:126px;height:23px;overflow:hidden;"><div class="t" style="right:3px;top:5px;">1748,776175</div></div>
<div class="cell num" style="left:855px;top:881px;width:111px;height:23px;overflow:hidden;"><div class="t" style="right:3px;top:5px;">68,55977367</div></div>
<div class="cell num" style="left:966px;top:881px;width:111px;height:23px;overflow:hidden;"><div class="t" style="right:3px;top:5px;">2,7118E-07</div></div>
<div class="cell num" style="left:1077px;top:881px;width:120px;height:23px;overflow:hidden;"><div class="t" style="right:3px;top:5px;">115040,3177</div></div>
<div class="cell num" style="left:1197px;top:881px;width:111px;height:23px;overflow:hidden;"><div class="t" style="right:3px;top:5px;">124751,0798</div></div>
<div class="cell num" style="left:1308px;top:881px;width:120px;height:23px;overflow:hidden;"><div class="t" style="right:3px;top:5px;">115040,3177</div></div>
<div class="cell num" style="left:1428px;top:881px;width:111px;height:23px;overflow:hidden;"><div class="t" style="right:3px;top:5px;">124751,0798</div></div>
<div class="a" style="left:854px;top:604px;width:114px;height:26px;border:2px solid #107c41"></div>
<div class="a" style="left:963px;top:626px;width:6px;height:6px;background:#107c41;border:1px solid #fff"></div>
<!-- vertical scrollbar -->
<div class="a" style="left:1897px;top:270px;width:21px;height:742px;background:#f5f5f5;border-radius:10px"></div>
<svg width="12" height="9" style="left:1901px;top:277px" viewBox="0 0 12 9"><path d="M6 1 L11 8 H1 Z" fill="#6e6e6e" stroke="#6e6e6e" stroke-width="1" stroke-linejoin="round"/></svg>
<div class="a" style="left:1902px;top:444px;width:11px;height:474px;background:#707070;border-radius:6px"></div>
<svg width="12" height="9" style="left:1901px;top:999px" viewBox="0 0 12 9"><path d="M1 1 H11 L6 8 Z" fill="#6e6e6e" stroke="#6e6e6e" stroke-width="1" stroke-linejoin="round"/></svg>
<!-- sheet tabs bar -->
<div class="a" style="left:750px;top:1012px;width:176px;height:12px;background:#fff"></div>
<div class="a" style="left:0;top:1012px;width:763px;height:40px;background:#f0f0f0;border-top-right-radius:7px;border-top:1px solid #dadada;border-right:1px solid #dddddd"></div>
<div class="a" style="left:913px;top:1012px;width:982px;height:40px;background:#f0f0f0;border-top-left-radius:7px;border-top:1px solid #dadada;border-left:1px solid #dddddd"></div>
<div class="a" style="left:1895px;top:1012px;width:25px;height:40px;background:#f0f0f0"></div>
<div class="a" style="left:752px;top:1038px;width:172px;height:14px;background:#f0f0f0"></div>
<div class="a" style="left:0;top:1052px;width:1920px;height:1px;background:#d6d6d6"></div>
<svg width="10" height="14" style="left:31px;top:1024px" viewBox="0 0 10 14"><path d="M8 1 L2 7 L8 13" fill="none" stroke="#8a8a8a" stroke-width="1.2"/></svg>
<svg width="10" height="14" style="left:72px;top:1024px" viewBox="0 0 10 14"><path d="M2 1 L8 7 L2 13" fill="none" stroke="#8a8a8a" stroke-width="1.2"/></svg>
<div class="t" style="left:153px;top:1024px;font-size:17px;color:#242424">Kurva Kalibrasi</div>
<div class="a" style="left:283px;top:1020px;width:1px;height:24px;background:#c8c8c8"></div>
<div class="t" style="left:302px;top:1024px;font-size:17px;color:#242424">2. Linearitas dan Rentang</div>
<div class="a" style="left:515px;top:1020px;width:1px;height:24px;background:#c8c8c8"></div>
<div class="t" style="left:533px;top:1024px;font-size:17px;color:#242424">3. Precision</div>
<div class="a" style="left:637px;top:1020px;width:1px;height:24px;background:#c8c8c8"></div>
<div class="t" style="left:654px;top:1024px;font-size:17px;color:#242424">4. Accuracy</div>
<div class="a" style="left:757px;top:1020px;width:1px;height:24px;background:#c8c8c8"></div>
<div class="a" style="left:762px;top:1012px;width:152px;height:35px;background:#fff;border-radius:0 0 7px 7px;box-shadow:0 1px 1px rgba(0,0,0,.12)"></div>
<div class="t" style="left:774px;top:1021px;font-size:17px;color:#1a1a1a;-webkit-text-stroke:0.35px #1a1a1a">5. LOD &amp; 6. LOQ</div>
<div class="a" style="left:773px;top:1042px;width:130px;height:2px;background:#107c41;border-radius:1px"></div>
<div class="a" style="left:918px;top:1020px;width:1px;height:24px;background:#c8c8c8"></div>
<div class="t" style="left:936px;top:1024px;font-size:17px;color:#242424">Data simulasi</div>
<div class="a" style="left:1055px;top:1020px;width:1px;height:24px;background:#c8c8c8"></div>
<svg width="16" height="16" style="left:1107px;top:1023px" viewBox="0 0 16 16"><path d="M8 1 V15 M1 8 H15" stroke="#424242" stroke-width="1.3"/></svg>
<div class="a" style="left:1463px;top:1025px;width:3px;height:3px;background:#333"></div>
<div class="a" style="left:1463px;top:1030px;width:3px;height:3px;background:#333"></div>
<div class="a" style="left:1463px;top:1035px;width:3px;height:3px;background:#333"></div>
<div class="a" style="left:1486px;top:1021px;width:411px;height:20px;background:#f5f5f5;border-radius:10px"></div>
<svg width="10" height="12" style="left:1490px;top:1025px" viewBox="0 0 10 12"><path d="M9 1 V11 L1 6 Z" fill="#6e6e6e"/></svg>
<div class="a" style="left:1506px;top:1026px;width:350px;height:11px;background:#707070;border-radius:6px"></div>
<svg width="10" height="12" style="left:1882px;top:1025px" viewBox="0 0 10 12"><path d="M1 1 V11 L9 6 Z" fill="#6e6e6e"/></svg>
<!-- status bar -->
<div class="a" style="left:0;top:1053px;width:1920px;height:27px;background:#f3f3f3"></div>
<div class="t" style="left:14px;top:1061px;font-size:12.3px;color:#424242">Ready</div>
<svg width="19" height="19" style="left:75px;top:1057px" viewBox="0 0 19 19"><circle cx="8.2" cy="2.6" r="2" fill="none" stroke="#333" stroke-width="1"/><path d="M1.2 6 Q1 4.5 2.5 4.8 L6.4 5.9 Q8.2 6.3 10 5.9 L13.9 4.8 Q15.4 4.5 15.2 6 L10.8 8.2 L10.4 11 L7.6 16.6 Q6.9 17.9 5.7 17.3 Q4.6 16.7 5.2 15.5 L7.1 11.2 L6.3 8.2 Z" fill="none" stroke="#333" stroke-width="1"/><path d="M10.5 12.3 L17.5 18.5 M17.5 12.3 L10.5 18.5" stroke="#333" stroke-width="1.1"/></svg>
<div class="t" style="left:97px;top:1061px;font-size:12.7px;font-weight:bold;color:#242424">Accessibility: Investigate</div>
<div class="a" style="left:1548px;top:1053px;width:50px;height:27px;background:#dedede"></div>
<svg width="18" height="18" style="left:1564px;top:1057px" viewBox="0 0 18 18"><path d="M1 1 H17 V17 H1 Z M1 6.3 H17 M1 11.6 H17 M6.3 1 V17 M11.6 1 V17" fill="none" stroke="#424242" stroke-width="1.4"/></svg>
<svg width="18" height="18" style="left:1614px;top:1057px" viewBox="0 0 18 18"><rect x="1" y="1" width="16" height="16" fill="none" stroke="#424242" stroke-width="1.3"/><rect x="4.5" y="4" width="9" height="10" fill="none" stroke="#424242" stroke-width="1"/><path d="M6.5 7 H11.5 M6.5 9 H11.5 M6.5 11 H11.5" stroke="#424242" stroke-width=".9"/></svg>
<svg width="18" height="18" style="left:1664px;top:1057px" viewBox="0 0 18 18"><path d="M1 1 H17 V17 H1 Z M1 11 H9 V1 M5 1 V11" fill="none" stroke="#424242" stroke-width="1.3"/></svg>
<div class="a" style="left:1705px;top:1065px;width:10px;height:1.3px;background:#424242"></div>
<div class="a" style="left:1721px;top:1065px;width:125px;height:1px;background:#6e6e6e"></div>
<div class="a" style="left:1781px;top:1058px;width:6px;height:16px;background:#6e6e6e;border-radius:1px"></div>
<svg width="12" height="12" style="left:1850px;top:1060px" viewBox="0 0 12 12"><path d="M6 1 V11 M1 6 H11" stroke="#424242" stroke-width="1.2"/></svg>
<div class="t" style="left:1878px;top:1061px;font-size:12.3px;color:#424242">100%</div>
</body></html>
